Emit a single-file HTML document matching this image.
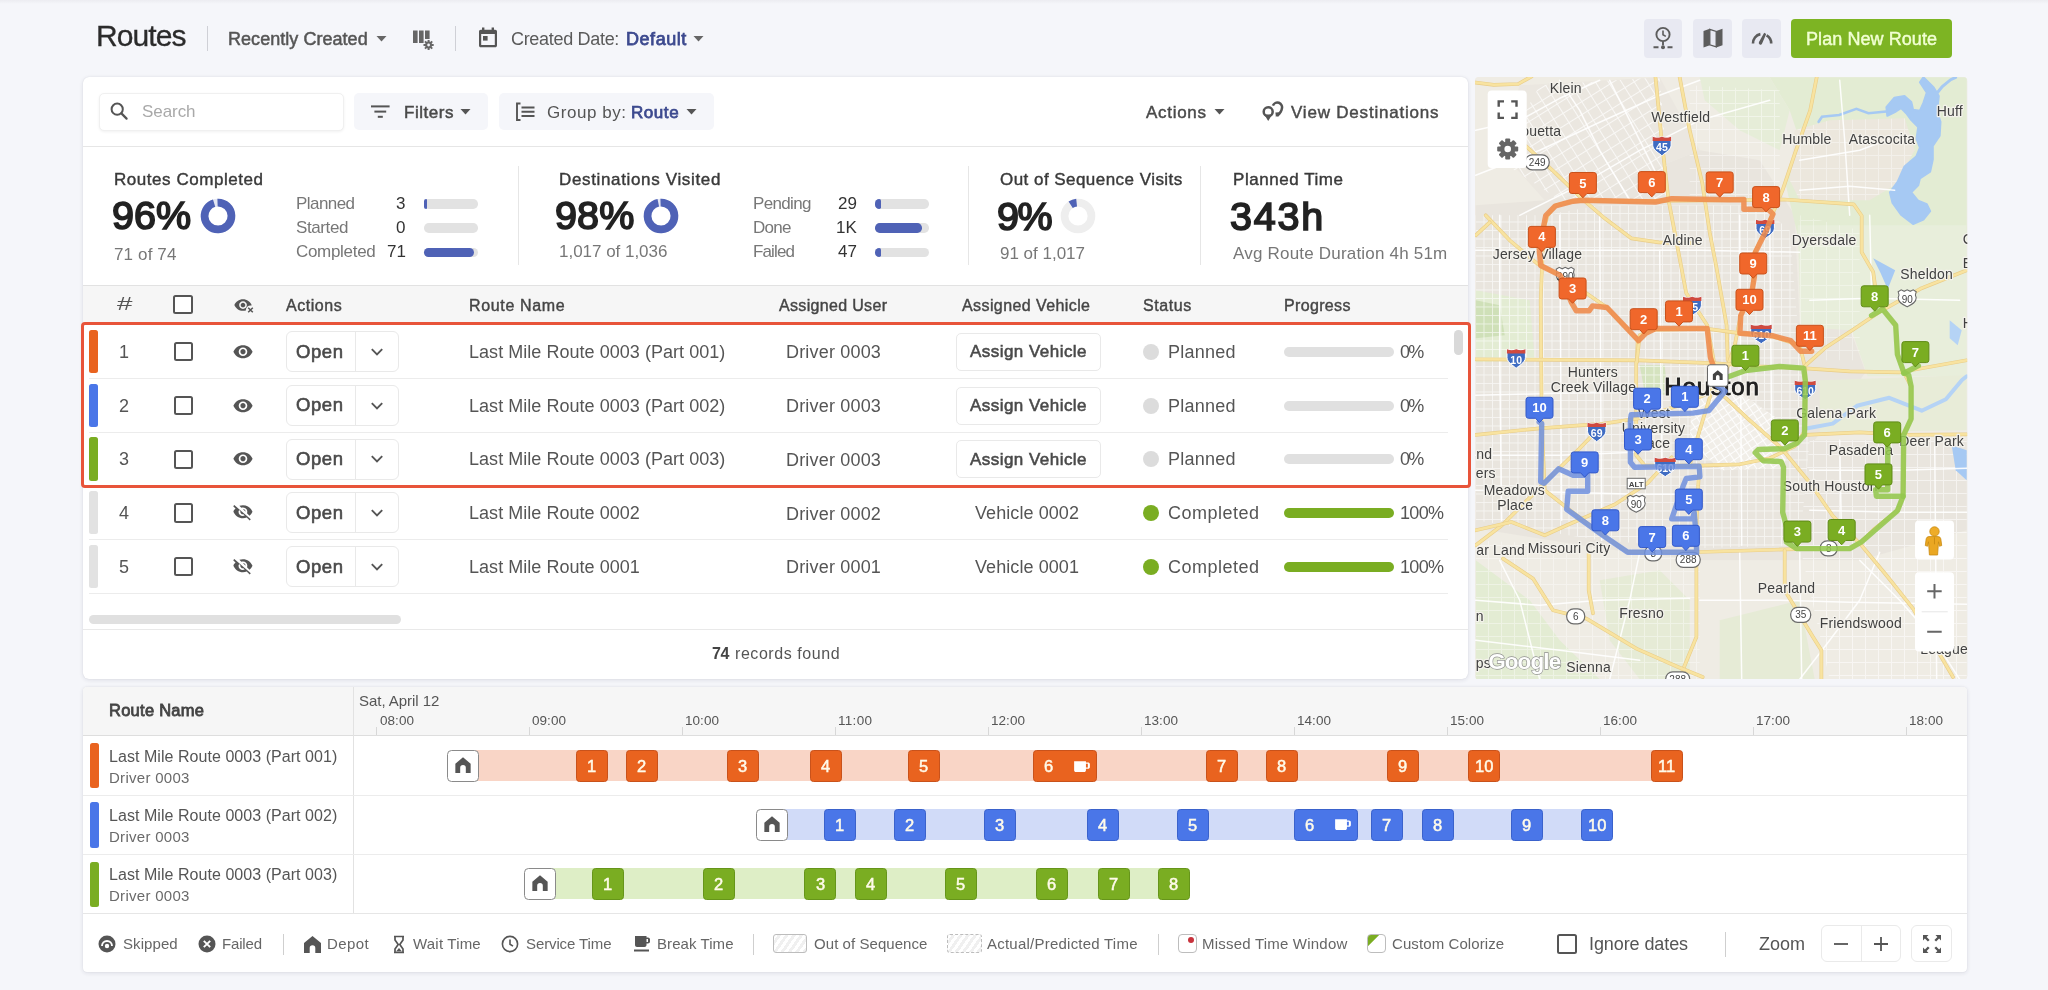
<!DOCTYPE html>
<html lang="en"><head><meta charset="utf-8"><title>Routes</title><style>
html,body{margin:0;padding:0}
body{opacity:.9999;width:2048px;height:990px;overflow:hidden;background:#f5f6fa;font-family:"Liberation Sans",Arial,sans-serif;position:relative}
.t{will-change:transform;position:absolute;white-space:nowrap;line-height:1;display:block}
.b{position:absolute;box-sizing:border-box;display:block}
svg text{font-family:"Liberation Sans",Arial,sans-serif}
</style></head><body>
<!-- p_header -->
<div class="b" style="left:0.0px;top:0.0px;width:2048.0px;height:4.0px;background:linear-gradient(#ececf1,#f5f6fa);"></div>
<span class="t" style="left:95.8px;top:21.1px;font-size:30px;color:#2b2b2b;letter-spacing:-0.91px;-webkit-text-stroke:0.3px #2b2b2b;">Routes</span>
<div class="b" style="left:206.5px;top:26.0px;width:1.0px;height:25.0px;background:#cfd0d6;"></div>
<span class="t" style="left:228.4px;top:29.8px;font-size:18px;color:#555;letter-spacing:0.04px;-webkit-text-stroke:0.5px #555;">Recently Created</span>
<svg class="b" style="left:376.0px;top:35.0px;" width="12" height="8" viewBox="0 0 12 8"><path d="M0.5 1 L10.5 1 L5.5 6.5Z" fill="#666"/></svg>
<svg class="b" style="left:412.0px;top:29.0px;" width="24" height="22" viewBox="0 0 24 22"><g fill="#666"><rect x="1" y="1.5" width="4.6" height="12.5"/><rect x="7" y="1.5" width="4.6" height="12.5"/><rect x="13" y="1.5" width="4.6" height="8.5"/>
    <circle cx="16.6" cy="16" r="3.4"/><g stroke="#666" stroke-width="2"><path d="M16.6 10.9v10.2M11.5 16h10.2M13 12.4l7.2 7.2M20.2 12.4l-7.2 7.2"/></g></g><circle cx="16.6" cy="16" r="1.4" fill="#f5f6fa"/></svg>
<div class="b" style="left:455.0px;top:26.0px;width:1.0px;height:25.0px;background:#cfd0d6;"></div>
<svg class="b" style="left:477.0px;top:26.0px;" width="22" height="23" viewBox="0 0 22 23"><path fill="#555" d="M5 1.5h2.4v2.2h7.2V1.5H17v2.2h1.2c1 0 1.8.8 1.8 1.8v14c0 1-.8 1.8-1.8 1.8H3.8c-1 0-1.8-.8-1.8-1.8v-14c0-1 .8-1.8 1.8-1.8H5z"/><rect x="4.2" y="8" width="13.6" height="11" fill="#f5f6fa"/><rect x="6" y="10" width="4.6" height="4.6" fill="#555"/></svg>
<span class="t" style="left:511.0px;top:29.8px;font-size:18px;color:#5a5a5a;letter-spacing:-0.31px;">Created Date:</span>
<span class="t" style="left:625.7px;top:29.8px;font-size:18px;color:#3d4a8f;letter-spacing:0.54px;-webkit-text-stroke:0.75px #3d4a8f;">Default</span>
<svg class="b" style="left:692.5px;top:35.0px;" width="12" height="8" viewBox="0 0 12 8"><path d="M0.5 1 L10.5 1 L5.5 6.5Z" fill="#666"/></svg>
<div class="b" style="left:1643.7px;top:19.0px;width:38.6px;height:38.6px;background:#e8e9f2;border-radius:4px;"></div>
<div class="b" style="left:1693.0px;top:19.0px;width:38.6px;height:38.6px;background:#e8e9f2;border-radius:4px;"></div>
<div class="b" style="left:1742.2px;top:19.0px;width:38.6px;height:38.6px;background:#e8e9f2;border-radius:4px;"></div>
<svg class="b" style="left:1650.0px;top:25.0px;" width="26" height="28" viewBox="0 0 26 28"><g fill="none" stroke="#5c5c5c" stroke-width="1.9"><circle cx="13" cy="9.5" r="6.6"/><path d="M13 5.6v4.2l2.8 1.6" stroke-width="1.6"/><path d="M13 16.2v4"/><path d="M3.5 22.3h5M17.5 22.3h5"/></g><circle cx="13" cy="22.3" r="2" fill="#5c5c5c"/></svg>
<svg class="b" style="left:1702.0px;top:27.0px;" width="22" height="22" viewBox="0 0 22 22"><path fill="#5c5c5c" d="M1.5 4 7.800 1.800v16.400L1.500 20.500zM14.200 4l6.300-2.200v16.400L14.200 20.500z"/><path fill="none" stroke="#5c5c5c" stroke-width="1.300" d="M7.800 2.400l6.400 2v15.400l-6.400-2z"/></svg>
<svg class="b" style="left:1750.0px;top:27.0px;" width="24" height="20" viewBox="0 0 24 20"><g fill="none" stroke="#5c5c5c" stroke-width="2.6" stroke-linecap="butt"><path d="M3 16.5a9.2 9.2 0 0 1 7.4-9.4"/><path d="M16.6 8.4a9.2 9.2 0 0 1 4.6 8.1"/></g><path fill="#5c5c5c" d="M14.2 5.8l2 1.1-4.2 9.8a1.7 1.7 0 0 1-3-1.6z"/></svg>
<div class="b" style="left:1791.0px;top:18.5px;width:161.3px;height:39.3px;background:#7db423;border-radius:4px;"></div>
<span class="t" style="left:1806.3px;top:30.2px;font-size:18px;color:#f1ffd2;letter-spacing:0.07px;-webkit-text-stroke:0.45px #f1ffd2;">Plan New Route</span>
<!-- p_panel -->
<div class="b" style="left:83.4px;top:77.4px;width:1384.8px;height:601.7px;background:#fff;border-radius:6px;box-shadow:0 1px 5px rgba(60,64,90,.13),0 0 1px rgba(60,64,90,.18);"></div>
<div class="b" style="left:98.5px;top:92.6px;width:245.0px;height:38.6px;background:#fff;border:1px solid #f0f0f0;border-radius:5px;box-shadow:0 1px 3px rgba(0,0,0,.06);"></div>
<svg class="b" style="left:108.0px;top:100.0px;" width="22" height="22" viewBox="0 0 22 22"><circle cx="9.2" cy="9.2" r="5.6" fill="none" stroke="#555" stroke-width="2"/><path d="M13.400 13.400 18.600 18.600" stroke="#555" stroke-width="2.2" stroke-linecap="round"/></svg>
<span class="t" style="left:142.3px;top:103.1px;font-size:17px;color:#a9a9a9;letter-spacing:-0.07px;">Search</span>
<div class="b" style="left:353.7px;top:92.7px;width:134.3px;height:37.8px;background:#f5f6fa;border-radius:5px;"></div>
<svg class="b" style="left:370.0px;top:104.0px;" width="22" height="16" viewBox="0 0 22 16"><g fill="#555"><rect x="1" y="1.4" width="18.6" height="2"/><rect x="4.4" y="6.6" width="11.8" height="2"/><rect x="7.800" y="11.800" width="5" height="2"/></g></svg>
<span class="t" style="left:403.5px;top:103.6px;font-size:17px;color:#4a4a4a;letter-spacing:0.54px;-webkit-text-stroke:0.5px #4a4a4a;">Filters</span>
<svg class="b" style="left:460.0px;top:107.5px;" width="12" height="8" viewBox="0 0 12 8"><path d="M0.5 1 L10.5 1 L5.5 6.5Z" fill="#555"/></svg>
<div class="b" style="left:499.0px;top:92.7px;width:215.0px;height:37.8px;background:#f5f6fa;border-radius:5px;"></div>
<svg class="b" style="left:514.5px;top:102.0px;" width="22" height="20" viewBox="0 0 22 20"><g fill="none" stroke="#555" stroke-width="1.900"><path d="M5.500 1.500H2v16.500h3.500"/><path d="M6.500 5.500H19.500M6.500 9.750H19.500M6.500 14H19.500"/></g></svg>
<span class="t" style="left:547.4px;top:103.6px;font-size:17px;color:#555;letter-spacing:0.54px;">Group by:</span>
<span class="t" style="left:631.4px;top:103.6px;font-size:17px;color:#3d4a8f;letter-spacing:0.56px;-webkit-text-stroke:0.75px #3d4a8f;">Route</span>
<svg class="b" style="left:686.0px;top:107.5px;" width="12" height="8" viewBox="0 0 12 8"><path d="M0.5 1 L10.5 1 L5.5 6.5Z" fill="#555"/></svg>
<span class="t" style="left:1146.0px;top:103.6px;font-size:17px;color:#4a4a4a;letter-spacing:0.71px;-webkit-text-stroke:0.45px #4a4a4a;">Actions</span>
<svg class="b" style="left:1213.5px;top:107.5px;" width="12" height="8" viewBox="0 0 12 8"><path d="M0.5 1 L10.5 1 L5.5 6.5Z" fill="#555"/></svg>
<svg class="b" style="left:1261.0px;top:101.0px;" width="24" height="22" viewBox="0 0 24 22"><g fill="none" stroke="#555" stroke-width="2.500"><circle cx="7.200" cy="10.800" r="4.500"/><path d="M11.900 4.700A4.700 4.700 0 0 1 20.800 7.800C20.600 10.600 18.400 12.600 16 15" stroke-linecap="butt"/></g><path fill="#555" d="M3.300 13.600h7.800L7.200 20zM18.600 11.200 14.900 16.200 14.400 11.600z"/></svg>
<span class="t" style="left:1290.9px;top:103.6px;font-size:17px;color:#4a4a4a;letter-spacing:0.80px;-webkit-text-stroke:0.45px #4a4a4a;">View Destinations</span>
<div class="b" style="left:83.4px;top:146.0px;width:1384.8px;height:1.0px;background:#e6e6e6;"></div>
<span class="t" style="left:114.0px;top:170.9px;font-size:17px;color:#3a3a3a;letter-spacing:0.55px;-webkit-text-stroke:0.42px #3a3a3a;">Routes Completed</span>
<span class="t" style="left:111.5px;top:196.4px;font-size:39.5px;color:#222;letter-spacing:-0.03px;-webkit-text-stroke:1.7px #222;">96%</span>
<svg class="b" style="left:198.2px;top:195.9px;" width="40" height="40" viewBox="0 0 40 40"><circle cx="20" cy="20" r="13.45" fill="none" stroke="#e3e6f3" stroke-width="7.70"/><circle cx="20" cy="20" r="13.45" fill="none" stroke="#4f62b6" stroke-width="7.70" stroke-dasharray="80.45 84.51" transform="rotate(-92 20 20)"/></svg>
<span class="t" style="left:113.6px;top:245.6px;font-size:17px;color:#777;letter-spacing:0.14px;">71 of 74</span>
<span class="t" style="left:295.6px;top:194.6px;font-size:17px;color:#777;letter-spacing:-0.56px;">Planned</span>
<span class="t" style="left:395.9px;top:194.6px;font-size:17px;color:#333;">3</span>
<div class="b" style="left:423.6px;top:199.1px;width:54.0px;height:9.5px;background:#e2e2e2;border-radius:4.75px;"></div><div class="b" style="left:423.6px;top:199.1px;width:3.2px;height:9.5px;background:#4f62b6;border-radius:2.5px;border-radius:4.8px 2px 2px 4.8px;"></div>
<span class="t" style="left:295.6px;top:218.8px;font-size:17px;color:#777;letter-spacing:-0.39px;">Started</span>
<span class="t" style="left:395.9px;top:218.8px;font-size:17px;color:#333;">0</span>
<div class="b" style="left:423.6px;top:223.2px;width:54.0px;height:9.5px;background:#e2e2e2;border-radius:4.75px;"></div>
<span class="t" style="left:295.6px;top:243.3px;font-size:17px;color:#777;letter-spacing:-0.31px;">Completed</span>
<span class="t" style="left:386.5px;top:243.3px;font-size:17px;color:#333;">71</span>
<div class="b" style="left:423.6px;top:247.8px;width:54.0px;height:9.5px;background:#e2e2e2;border-radius:4.75px;"></div><div class="b" style="left:423.6px;top:247.8px;width:50.2px;height:9.5px;background:#4f62b6;border-radius:4.75px;"></div>
<div class="b" style="left:517.5px;top:166.0px;width:1.0px;height:99.0px;background:#e6e6e6;"></div>
<span class="t" style="left:558.6px;top:170.9px;font-size:17px;color:#3a3a3a;letter-spacing:0.65px;-webkit-text-stroke:0.42px #3a3a3a;">Destinations Visited</span>
<span class="t" style="left:554.7px;top:196.4px;font-size:39.5px;color:#222;letter-spacing:0.12px;-webkit-text-stroke:1.7px #222;">98%</span>
<svg class="b" style="left:640.6px;top:195.9px;" width="40" height="40" viewBox="0 0 40 40"><circle cx="20" cy="20" r="13.45" fill="none" stroke="#e3e6f3" stroke-width="7.70"/><circle cx="20" cy="20" r="13.45" fill="none" stroke="#4f62b6" stroke-width="7.70" stroke-dasharray="81.64 84.51" transform="rotate(-92 20 20)"/></svg>
<span class="t" style="left:559.0px;top:243.3px;font-size:17px;color:#777;letter-spacing:-0.02px;">1,017 of 1,036</span>
<span class="t" style="left:753.4px;top:194.6px;font-size:17px;color:#777;letter-spacing:-0.65px;">Pending</span>
<span class="t" style="left:837.6px;top:194.6px;font-size:17px;color:#333;">29</span>
<div class="b" style="left:875.4px;top:199.1px;width:54.0px;height:9.5px;background:#e2e2e2;border-radius:4.75px;"></div><div class="b" style="left:875.4px;top:199.1px;width:5.9px;height:9.5px;background:#4f62b6;border-radius:2.5px;border-radius:4.8px 2px 2px 4.8px;"></div>
<span class="t" style="left:753.4px;top:218.8px;font-size:17px;color:#777;letter-spacing:-0.71px;">Done</span>
<span class="t" style="left:835.7px;top:218.8px;font-size:17px;color:#333;">1K</span>
<div class="b" style="left:875.4px;top:223.2px;width:54.0px;height:9.5px;background:#e2e2e2;border-radius:4.75px;"></div><div class="b" style="left:875.4px;top:223.2px;width:47.0px;height:9.5px;background:#4f62b6;border-radius:4.75px;"></div>
<span class="t" style="left:753.4px;top:243.3px;font-size:17px;color:#777;letter-spacing:-0.86px;">Failed</span>
<span class="t" style="left:837.6px;top:243.3px;font-size:17px;color:#333;">47</span>
<div class="b" style="left:875.4px;top:247.8px;width:54.0px;height:9.5px;background:#e2e2e2;border-radius:4.75px;"></div><div class="b" style="left:875.4px;top:247.8px;width:5.9px;height:9.5px;background:#4f62b6;border-radius:2.5px;border-radius:4.8px 2px 2px 4.8px;"></div>
<div class="b" style="left:968.0px;top:166.0px;width:1.0px;height:99.0px;background:#e6e6e6;"></div>
<span class="t" style="left:999.8px;top:170.6px;font-size:17px;color:#3a3a3a;letter-spacing:0.46px;-webkit-text-stroke:0.42px #3a3a3a;">Out of Sequence Visits</span>
<span class="t" style="left:997.3px;top:196.8px;font-size:39.5px;color:#222;letter-spacing:-1.39px;-webkit-text-stroke:1.7px #222;">9%</span>
<svg class="b" style="left:1058.2px;top:195.7px;" width="40" height="40" viewBox="0 0 40 40"><circle cx="20" cy="20" r="13.45" fill="none" stroke="#eeeeee" stroke-width="7.70"/><circle cx="20" cy="20" r="13.45" fill="none" stroke="#4f62b6" stroke-width="7.70" stroke-dasharray="6.34 84.51" transform="rotate(-123 20 20)"/></svg>
<span class="t" style="left:999.8px;top:245.2px;font-size:17px;color:#777;letter-spacing:-0.01px;">91 of 1,017</span>
<div class="b" style="left:1200.0px;top:166.0px;width:1.0px;height:99.0px;background:#e6e6e6;"></div>
<span class="t" style="left:1233.0px;top:170.6px;font-size:17px;color:#3a3a3a;letter-spacing:0.55px;-webkit-text-stroke:0.42px #3a3a3a;">Planned Time</span>
<span class="t" style="left:1230.0px;top:196.8px;font-size:39.5px;color:#222;letter-spacing:1.81px;-webkit-text-stroke:1.7px #222;">343h</span>
<span class="t" style="left:1233.0px;top:245.2px;font-size:17px;color:#777;letter-spacing:0.20px;">Avg Route Duration 4h 51m</span>
<div class="b" style="left:83.4px;top:285.4px;width:1384.8px;height:37.5px;background:#f6f6f6;border-top:1px solid #e2e2e2;"></div>
<span class="t" style="left:117.0px;top:295.3px;font-size:18.5px;color:#555;transform:scaleX(1.5);transform-origin:0 0;">#</span>
<div class="b" style="left:173.4px;top:294.6px;width:19.5px;height:19.2px;background:#fff;border:2px solid #555;border-radius:2.5px;"></div>
<svg class="b" style="left:233.5px;top:296.5px;" width="22" height="18" viewBox="0 0 22 18"><path transform="scale(.9) translate(0,1.2)" fill="#555" d="M10 1.2C5.6 1.2 1.9 3.9.4 7.7c1.5 3.8 5.2 6.5 9.6 6.5s8.1-2.7 9.6-6.5C18.100 3.900 14.400 1.200 10 1.200zm0 10.800c-2.400 0-4.300-1.900-4.300-4.300S7.600 3.400 10 3.400s4.300 1.900 4.300 4.300S12.400 12 10 12zm0-6.900c-1.400 0-2.600 1.200-2.600 2.600s1.200 2.600 2.600 2.600 2.600-1.200 2.600-2.600S11.400 5.100 10 5.100z"/><circle cx="16.500" cy="13" r="4.600" fill="#f6f6f6"/><path d="M14.200 10.700 18.800 15.300M18.800 10.700 14.200 15.300" stroke="#555" stroke-width="1.500"/></svg>
<span class="t" style="left:286.0px;top:297.5px;font-size:16px;color:#454545;letter-spacing:0.54px;-webkit-text-stroke:0.42px #454545;">Actions</span>
<span class="t" style="left:469.3px;top:297.5px;font-size:16px;color:#454545;letter-spacing:0.65px;-webkit-text-stroke:0.42px #454545;">Route Name</span>
<span class="t" style="left:779.4px;top:297.5px;font-size:16px;color:#454545;letter-spacing:0.33px;-webkit-text-stroke:0.42px #454545;">Assigned User</span>
<span class="t" style="left:962.4px;top:297.5px;font-size:16px;color:#454545;letter-spacing:0.41px;-webkit-text-stroke:0.42px #454545;">Assigned Vehicle</span>
<span class="t" style="left:1143.0px;top:297.5px;font-size:16px;color:#454545;letter-spacing:0.59px;-webkit-text-stroke:0.42px #454545;">Status</span>
<span class="t" style="left:1283.5px;top:297.5px;font-size:16px;color:#454545;letter-spacing:0.35px;-webkit-text-stroke:0.42px #454545;">Progress</span>
<div class="b" style="left:88.5px;top:378.1px;width:1359.0px;height:1.0px;background:#ececec;"></div>
<div class="b" style="left:88.8px;top:329.8px;width:9.3px;height:43.4px;background:#e9631f;border-radius:2.5px;"></div>
<span class="t" style="left:118.6px;top:342.8px;font-size:18px;color:#555;">1</span>
<div class="b" style="left:173.8px;top:342.2px;width:19.5px;height:19.2px;background:#fff;border:2px solid #555;border-radius:2.5px;"></div>
<svg class="b" style="left:233.4px;top:343.8px;" width="20" height="16" viewBox="0 0 20 16"><path fill="#555" d="M10 1.2C5.6 1.2 1.9 3.9.4 7.7c1.5 3.8 5.2 6.5 9.6 6.5s8.1-2.7 9.6-6.5C18.100 3.900 14.400 1.200 10 1.200zm0 10.800c-2.400 0-4.300-1.900-4.300-4.300S7.600 3.400 10 3.400s4.300 1.900 4.300 4.300S12.400 12 10 12zm0-6.900c-1.400 0-2.600 1.200-2.600 2.600s1.200 2.600 2.600 2.600 2.600-1.200 2.600-2.600S11.400 5.100 10 5.100z"/></svg>
<div class="b" style="left:285.5px;top:331.2px;width:113.3px;height:41.0px;background:#fff;border:1px solid #e9e9e9;border-radius:6px;"></div>
<div class="b" style="left:355.0px;top:331.2px;width:1.0px;height:41.0px;background:#e9e9e9;"></div>
<span class="t" style="left:296.4px;top:342.6px;font-size:18.5px;color:#4a4a4a;letter-spacing:0.58px;-webkit-text-stroke:0.6px #4a4a4a;">Open</span>
<svg class="b" style="left:370.0px;top:346.8px;" width="14" height="10" viewBox="0 0 14 10"><path d="M1.800 2.200 7 7.400 12.200 2.200" fill="none" stroke="#555" stroke-width="1.900"/></svg>
<span class="t" style="left:469.3px;top:342.8px;font-size:18px;color:#555;letter-spacing:0.04px;">Last Mile Route 0003 (Part 001)</span>
<span class="t" style="left:786.2px;top:343.3px;font-size:18px;color:#555;letter-spacing:0.18px;">Driver 0003</span>
<div class="b" style="left:955.8px;top:332.8px;width:145.5px;height:38.2px;background:#fff;border:1px solid #e9e9e9;border-radius:5px;"></div>
<span class="t" style="left:970.3px;top:343.4px;font-size:17px;color:#4a4a4a;letter-spacing:0.46px;-webkit-text-stroke:0.55px #4a4a4a;">Assign Vehicle</span>
<div class="b" style="left:1142.5px;top:343.8px;width:16.0px;height:16.0px;background:#dcdcdc;border-radius:8px;"></div>
<span class="t" style="left:1168.3px;top:342.8px;font-size:18px;color:#555;letter-spacing:0.24px;">Planned</span>
<div class="b" style="left:1283.5px;top:346.8px;width:110.5px;height:10.0px;background:#e0e0e0;border-radius:5px;"></div>
<span class="t" style="left:1399.5px;top:342.8px;font-size:18px;color:#555;letter-spacing:-1.72px;">0%</span>
<div class="b" style="left:88.5px;top:431.8px;width:1359.0px;height:1.0px;background:#ececec;"></div>
<div class="b" style="left:88.8px;top:383.6px;width:9.3px;height:43.4px;background:#4a76e8;border-radius:2.5px;"></div>
<span class="t" style="left:118.6px;top:396.6px;font-size:18px;color:#555;">2</span>
<div class="b" style="left:173.8px;top:395.9px;width:19.5px;height:19.2px;background:#fff;border:2px solid #555;border-radius:2.5px;"></div>
<svg class="b" style="left:233.4px;top:397.5px;" width="20" height="16" viewBox="0 0 20 16"><path fill="#555" d="M10 1.2C5.6 1.2 1.9 3.9.4 7.7c1.5 3.8 5.2 6.5 9.6 6.5s8.1-2.7 9.6-6.5C18.100 3.900 14.400 1.200 10 1.200zm0 10.800c-2.400 0-4.300-1.900-4.300-4.300S7.600 3.400 10 3.400s4.300 1.900 4.300 4.300S12.400 12 10 12zm0-6.900c-1.400 0-2.600 1.200-2.600 2.600s1.200 2.600 2.600 2.600 2.600-1.200 2.600-2.600S11.400 5.100 10 5.100z"/></svg>
<div class="b" style="left:285.5px;top:384.9px;width:113.3px;height:41.0px;background:#fff;border:1px solid #e9e9e9;border-radius:6px;"></div>
<div class="b" style="left:355.0px;top:384.9px;width:1.0px;height:41.0px;background:#e9e9e9;"></div>
<span class="t" style="left:296.4px;top:396.4px;font-size:18.5px;color:#4a4a4a;letter-spacing:0.58px;-webkit-text-stroke:0.6px #4a4a4a;">Open</span>
<svg class="b" style="left:370.0px;top:400.5px;" width="14" height="10" viewBox="0 0 14 10"><path d="M1.800 2.200 7 7.400 12.200 2.200" fill="none" stroke="#555" stroke-width="1.900"/></svg>
<span class="t" style="left:469.3px;top:396.6px;font-size:18px;color:#555;letter-spacing:0.04px;">Last Mile Route 0003 (Part 002)</span>
<span class="t" style="left:786.2px;top:397.1px;font-size:18px;color:#555;letter-spacing:0.18px;">Driver 0003</span>
<div class="b" style="left:955.8px;top:386.5px;width:145.5px;height:38.2px;background:#fff;border:1px solid #e9e9e9;border-radius:5px;"></div>
<span class="t" style="left:970.3px;top:397.1px;font-size:17px;color:#4a4a4a;letter-spacing:0.46px;-webkit-text-stroke:0.55px #4a4a4a;">Assign Vehicle</span>
<div class="b" style="left:1142.5px;top:397.5px;width:16.0px;height:16.0px;background:#dcdcdc;border-radius:8px;"></div>
<span class="t" style="left:1168.3px;top:396.6px;font-size:18px;color:#555;letter-spacing:0.24px;">Planned</span>
<div class="b" style="left:1283.5px;top:400.5px;width:110.5px;height:10.0px;background:#e0e0e0;border-radius:5px;"></div>
<span class="t" style="left:1399.5px;top:396.6px;font-size:18px;color:#555;letter-spacing:-1.72px;">0%</span>
<div class="b" style="left:88.5px;top:485.6px;width:1359.0px;height:1.0px;background:#ececec;"></div>
<div class="b" style="left:88.8px;top:437.3px;width:9.3px;height:43.4px;background:#7aad22;border-radius:2.5px;"></div>
<span class="t" style="left:118.6px;top:450.3px;font-size:18px;color:#555;">3</span>
<div class="b" style="left:173.8px;top:449.7px;width:19.5px;height:19.2px;background:#fff;border:2px solid #555;border-radius:2.5px;"></div>
<svg class="b" style="left:233.4px;top:451.3px;" width="20" height="16" viewBox="0 0 20 16"><path fill="#555" d="M10 1.2C5.6 1.2 1.9 3.9.4 7.7c1.5 3.8 5.2 6.5 9.6 6.5s8.1-2.7 9.6-6.5C18.100 3.900 14.400 1.200 10 1.200zm0 10.800c-2.400 0-4.300-1.900-4.300-4.300S7.600 3.400 10 3.400s4.300 1.900 4.300 4.300S12.400 12 10 12zm0-6.900c-1.400 0-2.600 1.200-2.600 2.600s1.200 2.600 2.600 2.600 2.600-1.200 2.600-2.600S11.400 5.100 10 5.100z"/></svg>
<div class="b" style="left:285.5px;top:438.7px;width:113.3px;height:41.0px;background:#fff;border:1px solid #e9e9e9;border-radius:6px;"></div>
<div class="b" style="left:355.0px;top:438.7px;width:1.0px;height:41.0px;background:#e9e9e9;"></div>
<span class="t" style="left:296.4px;top:450.1px;font-size:18.5px;color:#4a4a4a;letter-spacing:0.58px;-webkit-text-stroke:0.6px #4a4a4a;">Open</span>
<svg class="b" style="left:370.0px;top:454.3px;" width="14" height="10" viewBox="0 0 14 10"><path d="M1.800 2.200 7 7.400 12.200 2.200" fill="none" stroke="#555" stroke-width="1.900"/></svg>
<span class="t" style="left:469.3px;top:450.3px;font-size:18px;color:#555;letter-spacing:0.04px;">Last Mile Route 0003 (Part 003)</span>
<span class="t" style="left:786.2px;top:450.8px;font-size:18px;color:#555;letter-spacing:0.18px;">Driver 0003</span>
<div class="b" style="left:955.8px;top:440.3px;width:145.5px;height:38.2px;background:#fff;border:1px solid #e9e9e9;border-radius:5px;"></div>
<span class="t" style="left:970.3px;top:450.9px;font-size:17px;color:#4a4a4a;letter-spacing:0.46px;-webkit-text-stroke:0.55px #4a4a4a;">Assign Vehicle</span>
<div class="b" style="left:1142.5px;top:451.3px;width:16.0px;height:16.0px;background:#dcdcdc;border-radius:8px;"></div>
<span class="t" style="left:1168.3px;top:450.3px;font-size:18px;color:#555;letter-spacing:0.24px;">Planned</span>
<div class="b" style="left:1283.5px;top:454.3px;width:110.5px;height:10.0px;background:#e0e0e0;border-radius:5px;"></div>
<span class="t" style="left:1399.5px;top:450.3px;font-size:18px;color:#555;letter-spacing:-1.72px;">0%</span>
<div class="b" style="left:88.5px;top:539.3px;width:1359.0px;height:1.0px;background:#ececec;"></div>
<div class="b" style="left:88.8px;top:491.1px;width:9.3px;height:43.4px;background:#e2e2e2;border-radius:2.5px;"></div>
<span class="t" style="left:118.6px;top:504.1px;font-size:18px;color:#555;">4</span>
<div class="b" style="left:173.8px;top:503.4px;width:19.5px;height:19.2px;background:#fff;border:2px solid #555;border-radius:2.5px;"></div>
<svg class="b" style="left:233.4px;top:504.0px;" width="20" height="18" viewBox="0 0 20 18"><path fill="#555" d="M10 3.400c2.400 0 4.300 1.900 4.300 4.300 0 .6-.1 1.100-.3 1.600l2.500 2.500c1.300-1.100 2.300-2.500 3-4.100-1.500-3.800-5.200-6.500-9.600-6.500-1.200 0-2.400.2-3.500.6l1.900 1.900c.5-.2 1.100-.3 1.700-.3zM1.300 1.100.2 2.200l2 2 .4.400C1.500 5.400.6 6.500.4 7.700c1.500 3.800 5.200 6.500 9.600 6.500 1.300 0 2.600-.3 3.800-.700l.4.400 2.500 2.500 1.100-1.100zm4.800 4.800 1.300 1.300c0 .200-.1.400-.1.500 0 1.400 1.200 2.600 2.600 2.600.200 0 .400 0 .500-.1l1.300 1.300c-.6.300-1.200.5-1.900.5-2.400 0-4.300-1.900-4.300-4.300.1-.6.300-1.200.6-1.800zm3.800-.8 2.700 2.700v-.1c0-1.400-1.200-2.600-2.600-2.600z"/></svg>
<div class="b" style="left:285.5px;top:492.4px;width:113.3px;height:41.0px;background:#fff;border:1px solid #e9e9e9;border-radius:6px;"></div>
<div class="b" style="left:355.0px;top:492.4px;width:1.0px;height:41.0px;background:#e9e9e9;"></div>
<span class="t" style="left:296.4px;top:503.9px;font-size:18.5px;color:#4a4a4a;letter-spacing:0.58px;-webkit-text-stroke:0.6px #4a4a4a;">Open</span>
<svg class="b" style="left:370.0px;top:508.0px;" width="14" height="10" viewBox="0 0 14 10"><path d="M1.800 2.200 7 7.400 12.200 2.200" fill="none" stroke="#555" stroke-width="1.900"/></svg>
<span class="t" style="left:469.3px;top:504.1px;font-size:18px;color:#555;letter-spacing:0.04px;">Last Mile Route 0002</span>
<span class="t" style="left:786.2px;top:504.6px;font-size:18px;color:#555;letter-spacing:0.18px;">Driver 0002</span>
<span class="t" style="left:974.5px;top:504.1px;font-size:18px;color:#555;letter-spacing:0.08px;">Vehicle 0002</span>
<div class="b" style="left:1142.5px;top:505.0px;width:16.0px;height:16.0px;background:#7aad22;border-radius:8px;"></div>
<span class="t" style="left:1168.3px;top:504.1px;font-size:18px;color:#555;letter-spacing:0.49px;">Completed</span>
<div class="b" style="left:1283.5px;top:508.0px;width:110.5px;height:10.0px;background:#7aad22;border-radius:5px;"></div>
<span class="t" style="left:1400.3px;top:504.1px;font-size:18px;color:#555;letter-spacing:-0.68px;">100%</span>
<div class="b" style="left:88.5px;top:593.0px;width:1359.0px;height:1.0px;background:#ececec;"></div>
<div class="b" style="left:88.8px;top:544.8px;width:9.3px;height:43.4px;background:#e2e2e2;border-radius:2.5px;"></div>
<span class="t" style="left:118.6px;top:557.8px;font-size:18px;color:#555;">5</span>
<div class="b" style="left:173.8px;top:557.2px;width:19.5px;height:19.2px;background:#fff;border:2px solid #555;border-radius:2.5px;"></div>
<svg class="b" style="left:233.4px;top:557.8px;" width="20" height="18" viewBox="0 0 20 18"><path fill="#555" d="M10 3.400c2.400 0 4.300 1.900 4.300 4.300 0 .6-.1 1.100-.3 1.600l2.500 2.500c1.300-1.100 2.300-2.500 3-4.100-1.500-3.800-5.200-6.500-9.600-6.500-1.200 0-2.400.2-3.500.6l1.900 1.900c.5-.2 1.100-.3 1.700-.3zM1.300 1.100.2 2.200l2 2 .4.400C1.500 5.400.6 6.500.4 7.700c1.500 3.800 5.200 6.500 9.600 6.500 1.300 0 2.600-.3 3.800-.700l.4.400 2.500 2.500 1.100-1.100zm4.800 4.800 1.300 1.300c0 .200-.1.400-.1.500 0 1.400 1.200 2.600 2.600 2.600.200 0 .400 0 .500-.1l1.300 1.300c-.6.300-1.200.5-1.900.5-2.400 0-4.300-1.900-4.300-4.300.1-.6.300-1.200.6-1.800zm3.800-.8 2.700 2.700v-.1c0-1.400-1.200-2.600-2.600-2.600z"/></svg>
<div class="b" style="left:285.5px;top:546.2px;width:113.3px;height:41.0px;background:#fff;border:1px solid #e9e9e9;border-radius:6px;"></div>
<div class="b" style="left:355.0px;top:546.2px;width:1.0px;height:41.0px;background:#e9e9e9;"></div>
<span class="t" style="left:296.4px;top:557.6px;font-size:18.5px;color:#4a4a4a;letter-spacing:0.58px;-webkit-text-stroke:0.6px #4a4a4a;">Open</span>
<svg class="b" style="left:370.0px;top:561.8px;" width="14" height="10" viewBox="0 0 14 10"><path d="M1.800 2.200 7 7.400 12.200 2.200" fill="none" stroke="#555" stroke-width="1.900"/></svg>
<span class="t" style="left:469.3px;top:557.8px;font-size:18px;color:#555;letter-spacing:0.04px;">Last Mile Route 0001</span>
<span class="t" style="left:786.2px;top:558.3px;font-size:18px;color:#555;letter-spacing:0.18px;">Driver 0001</span>
<span class="t" style="left:974.5px;top:557.8px;font-size:18px;color:#555;letter-spacing:0.08px;">Vehicle 0001</span>
<div class="b" style="left:1142.5px;top:558.8px;width:16.0px;height:16.0px;background:#7aad22;border-radius:8px;"></div>
<span class="t" style="left:1168.3px;top:557.8px;font-size:18px;color:#555;letter-spacing:0.49px;">Completed</span>
<div class="b" style="left:1283.5px;top:561.8px;width:110.5px;height:10.0px;background:#7aad22;border-radius:5px;"></div>
<span class="t" style="left:1400.3px;top:557.8px;font-size:18px;color:#555;letter-spacing:-0.68px;">100%</span>
<div class="b" style="left:81.0px;top:322.0px;width:1390.0px;height:166.3px;border:3px solid #e8543a;border-radius:4px;"></div>
<div class="b" style="left:1454.0px;top:329.6px;width:8.6px;height:25.5px;background:#d9d9d9;border-radius:4.3px;"></div>
<div class="b" style="left:88.5px;top:614.8px;width:312.5px;height:9.5px;background:#e0e0e0;border-radius:4.8px;"></div>
<div class="b" style="left:83.4px;top:628.5px;width:1384.8px;height:1.0px;background:#e9e9e9;"></div>
<span class="t" style="left:712.0px;top:645.5px;font-size:16px;color:#444;letter-spacing:-0.30px;font-weight:700;">74</span>
<span class="t" style="left:734.5px;top:645.5px;font-size:16px;color:#555;letter-spacing:0.56px;">records found</span>
<!-- p_map -->
<svg class="b" style="left:1475.3px;top:76.7px;" width="492.3" height="602.7" viewBox="0 0 492.3 602.7"><defs><pattern id="gr" width="8.500" height="8.500" patternUnits="userSpaceOnUse"><path d="M0 .5H8.500M.5 0V8.500" stroke="#fff" stroke-width=".9" opacity=".62"/></pattern><pattern id="gr2" width="11" height="11" patternUnits="userSpaceOnUse" patternTransform="rotate(-32)"><path d="M0 .5H11M.5 0V11" stroke="#fff" stroke-width="1" opacity=".7"/></pattern><pattern id="gr4" width="7" height="7" patternUnits="userSpaceOnUse" patternTransform="rotate(-34)"><path d="M0 .5H7M.5 0V7" stroke="#fff" stroke-width="1.100" opacity=".9"/></pattern><pattern id="gr3" width="13" height="13" patternUnits="userSpaceOnUse"><path d="M0 .5H13M.5 0V13" stroke="#fff" stroke-width="1" opacity=".55"/></pattern><filter id="bl" x="-2%" y="-2%" width="104%" height="104%"><feGaussianBlur stdDeviation="0.55"/></filter><clipPath id="mc"><rect width="492.3" height="602.7" rx="4"/></clipPath></defs><g clip-path="url(#mc)"><rect width="492.3" height="602.7" fill="#efece4"/><g filter="url(#bl)"><rect x="-5" y="-5" width="502.3" height="612.7" fill="#efece4"/><path d="M0.7 128.3L69.7 123.3L124.7 113.3L224.7 73.3L284.7 83.3L319.7 138.3L324.7 248.3L374.7 251.3L390.7 295.3L339.7 363.3L491.7 363.3L491.7 453.3L384.7 483.3L224.7 483.3L124.7 471.3L0.7 451.3Z" fill="#e9e5de"/><path d="M44.7 8.3L184.7 0.3L224.7 73.3L124.7 113.3L69.7 123.3L24.7 73.3Z" fill="#ebe7e0"/><path d="M294.7 0.3L491.7 0.3L491.7 158.3L322.7 158.3L309.7 103.3L324.7 63.3L314.7 33.3Z" fill="#e3ecd3"/><path d="M322.7 148.3L491.7 148.3L491.7 299.3L392.7 299.3L376.7 253.3L325.7 250.3Z" fill="#e8eedb"/><path d="M319.7 53.3L354.7 43.3L429.7 41.3L439.7 73.3L419.7 108.3L394.7 123.3L324.7 123.3L314.7 103.3Z" fill="#ece7dd"/><path d="M319.7 53.3L354.7 43.3L429.7 41.3L439.7 73.3L419.7 108.3L394.7 123.3L324.7 123.3L314.7 103.3Z" fill="url(#gr3)" opacity=".7"/><path d="M0.7 483.3L54.7 523.3L84.7 563.3L124.7 602.3L0.7 602.3Z" fill="#e3ecd3"/><path d="M124.7 503.3L184.7 493.3L214.7 523.3L214.7 602.3L164.7 602.3L134.7 563.3Z" fill="#e6ebd6"/><path d="M244.7 543.3L324.7 523.3L339.7 602.3L244.7 602.3Z" fill="#e6ebd6"/><path d="M0.7 213.3L54.7 223.3L59.7 283.3L0.7 285.3Z" fill="#e3ecd3"/><path d="M344.7 303.3L491.7 298.3L491.7 353.3L344.7 355.3Z" fill="#e8ecd8"/><path d="M0.7 223.3L24.7 228.3L29.7 258.3L0.7 261.3Z" fill="#cfe0b8"/><path d="M164.7 288.3L189.7 288.3L192.7 318.3L169.7 315.3Z" fill="#d5e3bf"/><path d="M224.7 0.3L294.7 0.3L314.7 33.3L304.7 73.3L264.7 53.3L229.7 23.3Z" fill="#e6edd8"/><path d="M0.7 138.3L69.7 138.3L124.7 128.3L284.7 128.3L314.7 153.3L324.7 273.3L334.7 363.3L324.7 468.3L224.7 471.3L124.7 463.3L0.7 443.3Z" fill="url(#gr)"/><path d="M64.7 8.3L184.7 0.3L194.7 123.3L84.7 123.3L24.7 83.3Z" fill="url(#gr2)"/><path d="M334.7 363.3L491.7 363.3L491.7 602.3L354.7 602.3L324.7 468.3Z" fill="url(#gr3)"/><path d="M0.7 463.3L224.7 475.3L224.7 602.3L0.7 602.3Z" fill="url(#gr3)" opacity=".7"/><path d="M324.7 138.3L384.7 153.3L384.7 283.3L324.7 283.3Z" fill="url(#gr3)" opacity=".6"/><path d="M214.7 8.3L304.7 13.3L304.7 123.3L214.7 123.3Z" fill="url(#gr3)" opacity=".8"/><path d="M216.7 325.3L252.7 307.3L316.7 351.3L308.7 391.3L246.7 393.3L214.7 365.3Z" fill="#f1eee8"/><path d="M216.7 325.3L252.7 307.3L316.7 351.3L308.7 391.3L246.7 393.3L214.7 365.3Z" fill="url(#gr4)"/><path d="M411.4 30.2L419.2 20.8L429.5 19.1L436.3 25.1L438.1 32.8L444.9 33.7L448.4 25.9L451.8 15.6L444.9 5.3L448.4 0.3L458.7 10.5L463.8 19.1L462.1 34.5L465.5 44.8L464.7 58.6L457.8 68.9L457.8 82.6L455.2 94.6L444.9 101.5L443.2 108.4L436.3 115.3L443.2 123.8L451.8 127.3L455.2 134.1L448.4 142.7L438.1 147.0L426.0 137.6L417.4 125.6L414.9 115.3L422.6 104.9L429.5 89.5L441.5 79.2L444.9 70.6L441.5 62.0L443.2 50.0L436.3 43.1L431.2 36.2L426.0 31.1L420.9 34.5L412.3 38.8Z" fill="#a6c9f3" stroke="#a6c9f3" stroke-width="2" stroke-linejoin="round"/><path d="M462.7 15.3L467.3 9.6L475.7 2.7L480.7 0.3" fill="none" stroke="#a6c9f3" stroke-width="3" stroke-linecap="round"/><path d="M411.4 34.5L393.4 36.3L381.4 31.9L364.2 38.0L347.0 39.7L343.6 44.8" fill="none" stroke="#a6c9f3" stroke-width="2.600" stroke-linecap="round"/><path d="M398.2 181.3L420.2 193.3L412.7 212.3L405.7 196.3Z" fill="#a6c9f3"/><path d="M332.7 351.3L357.7 346.6L382.0 328.8L414.3 320.8L446.7 333.7L470.9 322.3L487.0 303.0L491.7 299.3" fill="none" stroke="#b5d3f5" stroke-width="4" stroke-linecap="round" stroke-linejoin="round"/><path d="M476.7 368.3L491.7 373.3L491.7 403.3L480.7 393.3Z" fill="#a6c9f3"/><path d="M474.7 243.3L486.7 253.3L482.7 268.3L474.7 261.3Z" fill="#b5d3f5"/><path d="M0.7 53.3L44.7 43.3L84.7 21.3L124.7 3.3" fill="none" stroke="#ffffff" stroke-width="1.5" stroke-linejoin="round" stroke-linecap="round" opacity="0.9"/><path d="M0.7 98.3L64.7 73.3L124.7 45.3L184.7 18.3L224.7 3.3" fill="none" stroke="#ffffff" stroke-width="1.5" stroke-linejoin="round" stroke-linecap="round" opacity="0.9"/><path d="M44.7 138.3L104.7 108.3L164.7 73.3L224.7 43.3L294.7 23.3" fill="none" stroke="#ffffff" stroke-width="1.5" stroke-linejoin="round" stroke-linecap="round" opacity="0.9"/><path d="M84.7 3.3L104.7 33.3L124.7 73.3L154.7 123.3" fill="none" stroke="#ffffff" stroke-width="1.5" stroke-linejoin="round" stroke-linecap="round" opacity="0.9"/><path d="M134.7 3.3L154.7 43.3L174.7 83.3L194.7 123.3" fill="none" stroke="#ffffff" stroke-width="1.5" stroke-linejoin="round" stroke-linecap="round" opacity="0.9"/><path d="M0.7 173.3L84.7 173.3L224.7 173.3L324.7 175.3" fill="none" stroke="#ffffff" stroke-width="1.5" stroke-linejoin="round" stroke-linecap="round" opacity="0.9"/><path d="M0.7 318.3L84.7 316.3L164.7 315.3" fill="none" stroke="#ffffff" stroke-width="1.5" stroke-linejoin="round" stroke-linecap="round" opacity="0.9"/><path d="M0.7 378.3L84.7 378.3L160.7 375.3" fill="none" stroke="#ffffff" stroke-width="1.5" stroke-linejoin="round" stroke-linecap="round" opacity="0.9"/><path d="M0.7 413.3L84.7 415.3L164.7 417.3L224.7 417.3" fill="none" stroke="#ffffff" stroke-width="1.5" stroke-linejoin="round" stroke-linecap="round" opacity="0.9"/><path d="M24.7 138.3L24.7 283.3L26.7 443.3" fill="none" stroke="#ffffff" stroke-width="1.5" stroke-linejoin="round" stroke-linecap="round" opacity="0.9"/><path d="M84.7 138.3L86.7 443.3" fill="none" stroke="#ffffff" stroke-width="1.5" stroke-linejoin="round" stroke-linecap="round" opacity="0.9"/><path d="M124.7 138.3L126.7 463.3" fill="none" stroke="#ffffff" stroke-width="1.5" stroke-linejoin="round" stroke-linecap="round" opacity="0.9"/><path d="M184.7 173.3L186.7 383.3" fill="none" stroke="#ffffff" stroke-width="1.5" stroke-linejoin="round" stroke-linecap="round" opacity="0.9"/><path d="M264.7 138.3L266.7 468.3" fill="none" stroke="#ffffff" stroke-width="1.5" stroke-linejoin="round" stroke-linecap="round" opacity="0.9"/><path d="M294.7 138.3L296.7 363.3" fill="none" stroke="#ffffff" stroke-width="1.5" stroke-linejoin="round" stroke-linecap="round" opacity="0.9"/><path d="M324.7 83.3L384.7 73.3L424.7 58.3" fill="none" stroke="#ffffff" stroke-width="1.5" stroke-linejoin="round" stroke-linecap="round" opacity="0.9"/><path d="M324.7 113.3L374.7 109.3L419.7 113.3" fill="none" stroke="#ffffff" stroke-width="1.5" stroke-linejoin="round" stroke-linecap="round" opacity="0.9"/><path d="M364.7 3.3L369.7 63.3L374.7 138.3" fill="none" stroke="#ffffff" stroke-width="1.5" stroke-linejoin="round" stroke-linecap="round" opacity="0.9"/><path d="M394.7 138.3L396.7 223.3" fill="none" stroke="#ffffff" stroke-width="1.5" stroke-linejoin="round" stroke-linecap="round" opacity="0.9"/><path d="M334.7 223.3L394.7 221.3L484.7 223.3" fill="none" stroke="#ffffff" stroke-width="1.5" stroke-linejoin="round" stroke-linecap="round" opacity="0.9"/><path d="M334.7 393.3L424.7 393.3L491.7 391.3" fill="none" stroke="#ffffff" stroke-width="1.5" stroke-linejoin="round" stroke-linecap="round" opacity="0.9"/><path d="M334.7 433.3L424.7 435.3L491.7 435.3" fill="none" stroke="#ffffff" stroke-width="1.5" stroke-linejoin="round" stroke-linecap="round" opacity="0.9"/><path d="M364.7 363.3L366.7 471.3" fill="none" stroke="#ffffff" stroke-width="1.5" stroke-linejoin="round" stroke-linecap="round" opacity="0.9"/><path d="M459.7 363.3L461.7 602.3" fill="none" stroke="#ffffff" stroke-width="1.5" stroke-linejoin="round" stroke-linecap="round" opacity="0.9"/><path d="M224.7 523.3L304.7 523.3L374.7 525.3L491.7 527.3" fill="none" stroke="#ffffff" stroke-width="1.5" stroke-linejoin="round" stroke-linecap="round" opacity="0.9"/><path d="M264.7 475.3L266.7 602.3" fill="none" stroke="#ffffff" stroke-width="1.5" stroke-linejoin="round" stroke-linecap="round" opacity="0.9"/><path d="M384.7 483.3L424.7 523.3L459.7 563.3L484.7 602.3" fill="none" stroke="#ffffff" stroke-width="1.5" stroke-linejoin="round" stroke-linecap="round" opacity="0.9"/><path d="M0.7 523.3L64.7 528.3L124.7 523.3L214.7 521.3" fill="none" stroke="#ffffff" stroke-width="1.5" stroke-linejoin="round" stroke-linecap="round" opacity="0.9"/><path d="M0.7 563.3L84.7 573.3L164.7 583.3" fill="none" stroke="#ffffff" stroke-width="1.5" stroke-linejoin="round" stroke-linecap="round" opacity="0.9"/><path d="M164.7 475.3L154.7 523.3L134.7 602.3" fill="none" stroke="#ffffff" stroke-width="1.5" stroke-linejoin="round" stroke-linecap="round" opacity="0.9"/><path d="M24.7 483.3L44.7 523.3L64.7 602.3" fill="none" stroke="#ffffff" stroke-width="1.5" stroke-linejoin="round" stroke-linecap="round" opacity="0.9"/><path d="M324.7 475.3L326.7 602.3" fill="none" stroke="#ffffff" stroke-width="1.5" stroke-linejoin="round" stroke-linecap="round" opacity="0.9"/><path d="M404.7 475.3L384.7 523.3L354.7 563.3L324.7 602.3" fill="none" stroke="#ffffff" stroke-width="1.5" stroke-linejoin="round" stroke-linecap="round" opacity="0.9"/><path d="M180.5 0.3L186.7 63.3L193.4 122.3L199.7 155.3L211.2 216.0L232.2 248.3L238.7 283.3L240.7 301.3" fill="none" stroke="#e9cd88" stroke-width="3.7" stroke-linejoin="round" stroke-linecap="round"/><path d="M180.5 0.3L186.7 63.3L193.4 122.3L199.7 155.3L211.2 216.0L232.2 248.3L238.7 283.3L240.7 301.3" fill="none" stroke="#f8e3a0" stroke-width="2.5" stroke-linejoin="round" stroke-linecap="round"/><path d="M204.7 0.3L214.7 53.3L227.3 106.3L234.7 155.3L241.7 191.8L251.6 248.3L252.7 283.3" fill="none" stroke="#e9cd88" stroke-width="3.7" stroke-linejoin="round" stroke-linecap="round"/><path d="M204.7 0.3L214.7 53.3L227.3 106.3L234.7 155.3L241.7 191.8L251.6 248.3L252.7 283.3" fill="none" stroke="#f8e3a0" stroke-width="2.5" stroke-linejoin="round" stroke-linecap="round"/><path d="M341.7 0.3L335.2 33.3L320.7 74.1L307.7 112.8L291.5 151.3L279.7 175.3L277.7 213.3L265.7 238.3L259.7 268.3L248.7 301.3" fill="none" stroke="#e9cd88" stroke-width="3.7" stroke-linejoin="round" stroke-linecap="round"/><path d="M341.7 0.3L335.2 33.3L320.7 74.1L307.7 112.8L291.5 151.3L279.7 175.3L277.7 213.3L265.7 238.3L259.7 268.3L248.7 301.3" fill="none" stroke="#f8e3a0" stroke-width="2.5" stroke-linejoin="round" stroke-linecap="round"/><path d="M72.7 138.3L80.7 128.3L99.7 123.8L184.7 123.8L289.7 122.8L309.3 122.5L378.7 127.3L386.7 138.7L386.7 175.3L398.2 195.0L400.7 213.3L407.7 232.2L420.7 248.3L422.4 277.3L428.7 295.2L436.1 309.3L436.1 341.8L428.7 357.9L428.1 419.3L422.4 433.8L399.7 451.6L386.4 465.0L374.7 471.6L321.4 472.1L224.7 475.0L152.7 475.0L127.7 458.3L97.7 435.3L69.7 413.3L66.7 343.3L65.7 223.3L67.7 173.3L68.7 151.3L72.7 138.3" fill="none" stroke="#e9cd88" stroke-width="3.7" stroke-linejoin="round" stroke-linecap="round"/><path d="M72.7 138.3L80.7 128.3L99.7 123.8L184.7 123.8L289.7 122.8L309.3 122.5L378.7 127.3L386.7 138.7L386.7 175.3L398.2 195.0L400.7 213.3L407.7 232.2L420.7 248.3L422.4 277.3L428.7 295.2L436.1 309.3L436.1 341.8L428.7 357.9L428.1 419.3L422.4 433.8L399.7 451.6L386.4 465.0L374.7 471.6L321.4 472.1L224.7 475.0L152.7 475.0L127.7 458.3L97.7 435.3L69.7 413.3L66.7 343.3L65.7 223.3L67.7 173.3L68.7 151.3L72.7 138.3" fill="none" stroke="#f8e3a0" stroke-width="2.5" stroke-linejoin="round" stroke-linecap="round"/><path d="M0.7 282.3L84.7 282.8L164.7 283.3L240.7 286.3L284.7 289.3L330.3 291.3L374.7 294.3L424.7 295.3L491.7 283.3" fill="none" stroke="#e9cd88" stroke-width="3.7" stroke-linejoin="round" stroke-linecap="round"/><path d="M0.7 282.3L84.7 282.8L164.7 283.3L240.7 286.3L284.7 289.3L330.3 291.3L374.7 294.3L424.7 295.3L491.7 283.3" fill="none" stroke="#f8e3a0" stroke-width="2.5" stroke-linejoin="round" stroke-linecap="round"/><path d="M10.7 138.3L34.7 163.3L62.6 186.9L85.2 198.3L132.0 230.5L162.7 262.8L161.7 285.3" fill="none" stroke="#e9cd88" stroke-width="3.7" stroke-linejoin="round" stroke-linecap="round"/><path d="M10.7 138.3L34.7 163.3L62.6 186.9L85.2 198.3L132.0 230.5L162.7 262.8L161.7 285.3" fill="none" stroke="#f8e3a0" stroke-width="2.5" stroke-linejoin="round" stroke-linecap="round"/><path d="M51.2 69.3L79.7 95.3L107.7 122.3L129.7 141.3L156.2 161.3L183.7 165.3L224.7 166.3" fill="none" stroke="#e9cd88" stroke-width="3.7" stroke-linejoin="round" stroke-linecap="round"/><path d="M51.2 69.3L79.7 95.3L107.7 122.3L129.7 141.3L156.2 161.3L183.7 165.3L224.7 166.3" fill="none" stroke="#f8e3a0" stroke-width="2.5" stroke-linejoin="round" stroke-linecap="round"/><path d="M161.7 285.3L164.7 258.3L174.7 252.8L232.7 251.8L265.7 256.3L298.0 259.6L324.7 268.3L330.3 291.3L330.3 353.3L319.7 369.3L294.7 381.3L264.7 387.3L224.1 388.6L169.7 388.6L161.2 378.3L161.2 285.3" fill="none" stroke="#e9cd88" stroke-width="3.7" stroke-linejoin="round" stroke-linecap="round"/><path d="M161.7 285.3L164.7 258.3L174.7 252.8L232.7 251.8L265.7 256.3L298.0 259.6L324.7 268.3L330.3 291.3L330.3 353.3L319.7 369.3L294.7 381.3L264.7 387.3L224.1 388.6L169.7 388.6L161.2 378.3L161.2 285.3" fill="none" stroke="#f8e3a0" stroke-width="2.5" stroke-linejoin="round" stroke-linecap="round"/><path d="M240.7 313.3L204.7 328.3L164.7 341.3L128.7 346.6L64.7 351.3L0.7 357.9" fill="none" stroke="#e9cd88" stroke-width="3.7" stroke-linejoin="round" stroke-linecap="round"/><path d="M240.7 313.3L204.7 328.3L164.7 341.3L128.7 346.6L64.7 351.3L0.7 357.9" fill="none" stroke="#f8e3a0" stroke-width="2.5" stroke-linejoin="round" stroke-linecap="round"/><path d="M128.7 346.6L104.7 371.3L85.2 390.3L59.3 416.1L27.0 448.3L0.7 468.3" fill="none" stroke="#e9cd88" stroke-width="3.7" stroke-linejoin="round" stroke-linecap="round"/><path d="M128.7 346.6L104.7 371.3L85.2 390.3L59.3 416.1L27.0 448.3L0.7 468.3" fill="none" stroke="#f8e3a0" stroke-width="2.5" stroke-linejoin="round" stroke-linecap="round"/><path d="M196.7 380.3L172.4 406.3L140.1 427.3L91.7 448.3L69.7 458.3L36.4 445.0L0.7 453.3" fill="none" stroke="#e9cd88" stroke-width="3.7" stroke-linejoin="round" stroke-linecap="round"/><path d="M196.7 380.3L172.4 406.3L140.1 427.3L91.7 448.3L69.7 458.3L36.4 445.0L0.7 453.3" fill="none" stroke="#f8e3a0" stroke-width="2.5" stroke-linejoin="round" stroke-linecap="round"/><path d="M224.1 388.3L221.7 443.3L221.4 476.3L221.4 560.0L207.7 593.3L204.7 602.3" fill="none" stroke="#e9cd88" stroke-width="3.7" stroke-linejoin="round" stroke-linecap="round"/><path d="M224.1 388.3L221.7 443.3L221.4 476.3L221.4 560.0L207.7 593.3L204.7 602.3" fill="none" stroke="#f8e3a0" stroke-width="2.5" stroke-linejoin="round" stroke-linecap="round"/><path d="M28.0 481.6L58.0 501.6L78.0 533.3L111.4 541.6L161.4 571.6L203.0 590.0L227.7 600.0" fill="none" stroke="#e9cd88" stroke-width="3.7" stroke-linejoin="round" stroke-linecap="round"/><path d="M28.0 481.6L58.0 501.6L78.0 533.3L111.4 541.6L161.4 571.6L203.0 590.0L227.7 600.0" fill="none" stroke="#f8e3a0" stroke-width="2.5" stroke-linejoin="round" stroke-linecap="round"/><path d="M113.7 476.3L113.7 513.3L118.0 536.3" fill="none" stroke="#e9cd88" stroke-width="3.7" stroke-linejoin="round" stroke-linecap="round"/><path d="M113.7 476.3L113.7 513.3L118.0 536.3" fill="none" stroke="#f8e3a0" stroke-width="2.5" stroke-linejoin="round" stroke-linecap="round"/><path d="M244.7 315.3L274.7 343.3L306.1 370.8L335.2 406.3L357.7 438.7L386.4 468.3L411.4 498.3L438.0 531.6L478.0 600.0" fill="none" stroke="#e9cd88" stroke-width="3.7" stroke-linejoin="round" stroke-linecap="round"/><path d="M244.7 315.3L274.7 343.3L306.1 370.8L335.2 406.3L357.7 438.7L386.4 468.3L411.4 498.3L438.0 531.6L478.0 600.0" fill="none" stroke="#f8e3a0" stroke-width="2.5" stroke-linejoin="round" stroke-linecap="round"/><path d="M329.7 357.9L384.7 355.3L428.7 357.9L491.7 357.3" fill="none" stroke="#e9cd88" stroke-width="3.7" stroke-linejoin="round" stroke-linecap="round"/><path d="M329.7 357.9L384.7 355.3L428.7 357.9L491.7 357.3" fill="none" stroke="#f8e3a0" stroke-width="2.5" stroke-linejoin="round" stroke-linecap="round"/><path d="M309.7 473.3L309.7 513.3L338.0 560.0L346.4 573.3L346.4 602.3" fill="none" stroke="#e9cd88" stroke-width="3.7" stroke-linejoin="round" stroke-linecap="round"/><path d="M309.7 473.3L309.7 513.3L338.0 560.0L346.4 573.3L346.4 602.3" fill="none" stroke="#f8e3a0" stroke-width="2.5" stroke-linejoin="round" stroke-linecap="round"/><path d="M330.3 288.7L349.7 271.3L377.2 253.2L406.3 233.8L446.7 211.2L491.7 193.3" fill="none" stroke="#e9cd88" stroke-width="3.7" stroke-linejoin="round" stroke-linecap="round"/><path d="M330.3 288.7L349.7 271.3L377.2 253.2L406.3 233.8L446.7 211.2L491.7 193.3" fill="none" stroke="#f8e3a0" stroke-width="2.5" stroke-linejoin="round" stroke-linecap="round"/><path d="M-1.3 5.3L18.7 7.8L43.2 7.0L56.7 -0.7" fill="none" stroke="#e9cd88" stroke-width="3.7" stroke-linejoin="round" stroke-linecap="round"/><path d="M-1.3 5.3L18.7 7.8L43.2 7.0L56.7 -0.7" fill="none" stroke="#f8e3a0" stroke-width="2.5" stroke-linejoin="round" stroke-linecap="round"/><path d="M0.7 158.3L14.7 145.3" fill="none" stroke="#e9cd88" stroke-width="3.7" stroke-linejoin="round" stroke-linecap="round"/><path d="M0.7 158.3L14.7 145.3" fill="none" stroke="#f8e3a0" stroke-width="2.5" stroke-linejoin="round" stroke-linecap="round"/><path d="M240.7 301.3L224.7 353.3L214.7 388.3" fill="none" stroke="#e9cd88" stroke-width="3.7" stroke-linejoin="round" stroke-linecap="round"/><path d="M240.7 301.3L224.7 353.3L214.7 388.3" fill="none" stroke="#f8e3a0" stroke-width="2.5" stroke-linejoin="round" stroke-linecap="round"/></g><text x="74.7" y="16.3" font-size="14" fill="#414141" text-anchor="start" letter-spacing="0.2" stroke="#f4f2ec" stroke-width="2.400" paint-order="stroke" stroke-linejoin="round">Klein</text><text x="176.2" y="45.3" font-size="14" fill="#414141" text-anchor="start" letter-spacing="0.2" stroke="#f4f2ec" stroke-width="2.400" paint-order="stroke" stroke-linejoin="round">Westfield</text><text x="46.2" y="58.8" font-size="14" fill="#414141" text-anchor="start" letter-spacing="0.2" stroke="#f4f2ec" stroke-width="2.400" paint-order="stroke" stroke-linejoin="round">ouetta</text><text x="307.2" y="67.3" font-size="14" fill="#414141" text-anchor="start" letter-spacing="0.2" stroke="#f4f2ec" stroke-width="2.400" paint-order="stroke" stroke-linejoin="round">Humble</text><text x="373.7" y="67.3" font-size="14" fill="#414141" text-anchor="start" letter-spacing="0.2" stroke="#f4f2ec" stroke-width="2.400" paint-order="stroke" stroke-linejoin="round">Atascocita</text><text x="461.7" y="38.8" font-size="14" fill="#414141" text-anchor="start" letter-spacing="0.2" stroke="#f4f2ec" stroke-width="2.400" paint-order="stroke" stroke-linejoin="round">Huff</text><text x="187.7" y="167.8" font-size="14" fill="#414141" text-anchor="start" letter-spacing="0.2" stroke="#f4f2ec" stroke-width="2.400" paint-order="stroke" stroke-linejoin="round">Aldine</text><text x="316.7" y="168.3" font-size="14" fill="#414141" text-anchor="start" letter-spacing="0.2" stroke="#f4f2ec" stroke-width="2.400" paint-order="stroke" stroke-linejoin="round">Dyersdale</text><text x="17.7" y="181.8" font-size="14" fill="#414141" text-anchor="start" letter-spacing="0.2" stroke="#f4f2ec" stroke-width="2.400" paint-order="stroke" stroke-linejoin="round">Jersey Village</text><text x="425.2" y="202.3" font-size="14" fill="#414141" text-anchor="start" letter-spacing="0.2" stroke="#f4f2ec" stroke-width="2.400" paint-order="stroke" stroke-linejoin="round">Sheldon</text><text x="487.7" y="167.3" font-size="14" fill="#414141" text-anchor="start" letter-spacing="0.2" stroke="#f4f2ec" stroke-width="2.400" paint-order="stroke" stroke-linejoin="round">C</text><text x="487.7" y="191.3" font-size="14" fill="#414141" text-anchor="start" letter-spacing="0.2" stroke="#f4f2ec" stroke-width="2.400" paint-order="stroke" stroke-linejoin="round">E</text><text x="487.7" y="251.3" font-size="14" fill="#414141" text-anchor="start" letter-spacing="0.2" stroke="#f4f2ec" stroke-width="2.400" paint-order="stroke" stroke-linejoin="round">H</text><text x="92.7" y="300.3" font-size="14" fill="#414141" text-anchor="start" letter-spacing="0.2" stroke="#f4f2ec" stroke-width="2.400" paint-order="stroke" stroke-linejoin="round">Hunters</text><text x="75.7" y="315.3" font-size="14" fill="#414141" text-anchor="start" letter-spacing="0.2" stroke="#f4f2ec" stroke-width="2.400" paint-order="stroke" stroke-linejoin="round">Creek Village</text><text x="321.2" y="341.3" font-size="14" fill="#414141" text-anchor="start" letter-spacing="0.2" stroke="#f4f2ec" stroke-width="2.400" paint-order="stroke" stroke-linejoin="round">Galena Park</text><text x="353.7" y="378.3" font-size="14" fill="#414141" text-anchor="start" letter-spacing="0.2" stroke="#f4f2ec" stroke-width="2.400" paint-order="stroke" stroke-linejoin="round">Pasadena</text><text x="424.2" y="369.3" font-size="14" fill="#414141" text-anchor="start" letter-spacing="0.2" stroke="#f4f2ec" stroke-width="2.400" paint-order="stroke" stroke-linejoin="round">Deer Park</text><text x="307.7" y="413.8" font-size="14" fill="#414141" text-anchor="start" letter-spacing="0.2" stroke="#f4f2ec" stroke-width="2.400" paint-order="stroke" stroke-linejoin="round">South Houston</text><text x="8.7" y="418.3" font-size="14" fill="#414141" text-anchor="start" letter-spacing="0.2" stroke="#f4f2ec" stroke-width="2.400" paint-order="stroke" stroke-linejoin="round">Meadows</text><text x="22.2" y="433.3" font-size="14" fill="#414141" text-anchor="start" letter-spacing="0.2" stroke="#f4f2ec" stroke-width="2.400" paint-order="stroke" stroke-linejoin="round">Place</text><text x="1.2" y="382.3" font-size="14" fill="#414141" text-anchor="start" letter-spacing="0.2" stroke="#f4f2ec" stroke-width="2.400" paint-order="stroke" stroke-linejoin="round">nd</text><text x="0.7" y="401.3" font-size="14" fill="#414141" text-anchor="start" letter-spacing="0.2" stroke="#f4f2ec" stroke-width="2.400" paint-order="stroke" stroke-linejoin="round">ers</text><text x="1.2" y="478.3" font-size="14" fill="#414141" text-anchor="start" letter-spacing="0.2" stroke="#f4f2ec" stroke-width="2.400" paint-order="stroke" stroke-linejoin="round">ar Land</text><text x="52.7" y="476.3" font-size="14" fill="#414141" text-anchor="start" letter-spacing="0.2" stroke="#f4f2ec" stroke-width="2.400" paint-order="stroke" stroke-linejoin="round">Missouri City</text><text x="282.7" y="515.8" font-size="14" fill="#414141" text-anchor="start" letter-spacing="0.2" stroke="#f4f2ec" stroke-width="2.400" paint-order="stroke" stroke-linejoin="round">Pearland</text><text x="144.2" y="540.8" font-size="14" fill="#414141" text-anchor="start" letter-spacing="0.2" stroke="#f4f2ec" stroke-width="2.400" paint-order="stroke" stroke-linejoin="round">Fresno</text><text x="344.7" y="550.8" font-size="14" fill="#414141" text-anchor="start" letter-spacing="0.2" stroke="#f4f2ec" stroke-width="2.400" paint-order="stroke" stroke-linejoin="round">Friendswood</text><text x="91.2" y="594.8" font-size="14" fill="#414141" text-anchor="start" letter-spacing="0.2" stroke="#f4f2ec" stroke-width="2.400" paint-order="stroke" stroke-linejoin="round">Sienna</text><text x="0.7" y="544.3" font-size="14" fill="#414141" text-anchor="start" letter-spacing="0.2" stroke="#f4f2ec" stroke-width="2.400" paint-order="stroke" stroke-linejoin="round">n</text><text x="0.7" y="590.8" font-size="14" fill="#414141" text-anchor="start" letter-spacing="0.2" stroke="#f4f2ec" stroke-width="2.400" paint-order="stroke" stroke-linejoin="round">ps</text><text x="445.2" y="576.8" font-size="14" fill="#414141" text-anchor="start" letter-spacing="0.2" stroke="#f4f2ec" stroke-width="2.400" paint-order="stroke" stroke-linejoin="round">League</text><text x="162.7" y="341.3" font-size="14" fill="#414141" text-anchor="start" letter-spacing="0.2" stroke="#f4f2ec" stroke-width="2.400" paint-order="stroke" stroke-linejoin="round">West</text><text x="146.7" y="356.3" font-size="14" fill="#414141" text-anchor="start" letter-spacing="0.2" stroke="#f4f2ec" stroke-width="2.400" paint-order="stroke" stroke-linejoin="round">University</text><text x="159.2" y="370.8" font-size="14" fill="#414141" text-anchor="start" letter-spacing="0.2" stroke="#f4f2ec" stroke-width="2.400" paint-order="stroke" stroke-linejoin="round">Place</text><text x="189.2" y="317.8" font-size="24" fill="#222" letter-spacing="0.900" stroke="#f4f2ec" stroke-width="3.200" paint-order="stroke" stroke-linejoin="round">Houston</text><text x="189.2" y="317.8" font-size="24" fill="#222" letter-spacing="0.900" stroke="#222" stroke-width=".8">Houston</text><path d="M177.7 59.8q4.6 2 9.2 0q4.6 2 9.2 0v8.500c0 5-8.2 9-9.2 10.500c-1-1.500-9.2-5.500-9.2-10.500z" fill="#3f6cc2" stroke="#fff" stroke-width="1"/><path d="M177.7 59.8q4.6 2 9.2 0q4.6 2 9.2 0v4.300h-18.5z" fill="#d04a3f"/><text x="186.9" y="74.5" font-size="10.500" font-weight="700" fill="#fff" text-anchor="middle">45</text><path d="M281.0 142.8q4.6 2 9.2 0q4.6 2 9.2 0v8.500c0 5-8.2 9-9.2 10.500c-1-1.500-9.2-5.500-9.2-10.500z" fill="#3f6cc2" stroke="#fff" stroke-width="1"/><path d="M281.0 142.8q4.6 2 9.2 0q4.6 2 9.2 0v4.300h-18.5z" fill="#d04a3f"/><text x="290.2" y="157.5" font-size="10.500" font-weight="700" fill="#fff" text-anchor="middle">69</text><path d="M208.0 219.8q4.6 2 9.2 0q4.6 2 9.2 0v8.500c0 5-8.2 9-9.2 10.500c-1-1.500-9.2-5.500-9.2-10.500z" fill="#3f6cc2" stroke="#fff" stroke-width="1"/><path d="M208.0 219.8q4.6 2 9.2 0q4.6 2 9.2 0v4.300h-18.5z" fill="#d04a3f"/><text x="217.2" y="234.5" font-size="10.500" font-weight="700" fill="#fff" text-anchor="middle">45</text><path d="M275.7 247.8q5.2 2 10.5 0q5.2 2 10.5 0v8.500c0 5-9.5 9-10.5 10.500c-1-1.500-10.5-5.500-10.5-10.500z" fill="#3f6cc2" stroke="#fff" stroke-width="1"/><path d="M275.7 247.8q5.2 2 10.5 0q5.2 2 10.5 0v4.300h-21z" fill="#d04a3f"/><text x="286.2" y="262.5" font-size="10.500" font-weight="700" fill="#fff" text-anchor="middle">610</text><path d="M32.0 272.3q4.6 2 9.2 0q4.6 2 9.2 0v8.500c0 5-8.2 9-9.2 10.500c-1-1.500-9.2-5.500-9.2-10.500z" fill="#3f6cc2" stroke="#fff" stroke-width="1"/><path d="M32.0 272.3q4.6 2 9.2 0q4.6 2 9.2 0v4.300h-18.5z" fill="#d04a3f"/><text x="41.2" y="287.0" font-size="10.500" font-weight="700" fill="#fff" text-anchor="middle">10</text><path d="M112.5 345.8q4.6 2 9.2 0q4.6 2 9.2 0v8.500c0 5-8.2 9-9.2 10.500c-1-1.500-9.2-5.500-9.2-10.500z" fill="#3f6cc2" stroke="#fff" stroke-width="1"/><path d="M112.5 345.8q4.6 2 9.2 0q4.6 2 9.2 0v4.300h-18.5z" fill="#d04a3f"/><text x="121.7" y="360.5" font-size="10.500" font-weight="700" fill="#fff" text-anchor="middle">69</text><path d="M179.7 380.8q5.2 2 10.5 0q5.2 2 10.5 0v8.500c0 5-9.5 9-10.5 10.500c-1-1.500-10.5-5.500-10.5-10.500z" fill="#3f6cc2" stroke="#fff" stroke-width="1"/><path d="M179.7 380.8q5.2 2 10.5 0q5.2 2 10.5 0v4.300h-21z" fill="#d04a3f"/><text x="190.2" y="395.5" font-size="10.500" font-weight="700" fill="#fff" text-anchor="middle">610</text><path d="M319.7 303.8q5.2 2 10.5 0q5.2 2 10.5 0v8.500c0 5-9.5 9-10.5 10.500c-1-1.500-10.5-5.500-10.5-10.500z" fill="#3f6cc2" stroke="#fff" stroke-width="1"/><path d="M319.7 303.8q5.2 2 10.5 0q5.2 2 10.5 0v4.300h-21z" fill="#d04a3f"/><text x="330.2" y="318.5" font-size="10.500" font-weight="700" fill="#fff" text-anchor="middle">610</text><rect x="50.2" y="77.8" width="24" height="15" rx="7" fill="#fff" stroke="#6b6b6b" stroke-width="1.200"/><text x="62.2" y="88.9" font-size="10" fill="#444" text-anchor="middle">249</text><rect x="169.7" y="468.8" width="17" height="15" rx="7" fill="#fff" stroke="#6b6b6b" stroke-width="1.200"/><text x="178.2" y="479.9" font-size="10" fill="#444" text-anchor="middle">8</text><rect x="201.2" y="475.3" width="24" height="15" rx="7" fill="#fff" stroke="#6b6b6b" stroke-width="1.200"/><text x="213.2" y="486.4" font-size="10" fill="#444" text-anchor="middle">288</text><rect x="91.7" y="531.8" width="18" height="15" rx="7" fill="#fff" stroke="#6b6b6b" stroke-width="1.200"/><text x="100.7" y="542.9" font-size="10" fill="#444" text-anchor="middle">6</text><rect x="345.2" y="463.8" width="17" height="15" rx="7" fill="#fff" stroke="#6b6b6b" stroke-width="1.200"/><text x="353.7" y="474.9" font-size="10" fill="#444" text-anchor="middle">8</text><rect x="315.7" y="530.3" width="20" height="15" rx="7" fill="#fff" stroke="#6b6b6b" stroke-width="1.200"/><text x="325.7" y="541.4" font-size="10" fill="#444" text-anchor="middle">35</text><rect x="190.7" y="594.8" width="24" height="15" rx="7" fill="#fff" stroke="#6b6b6b" stroke-width="1.200"/><text x="202.7" y="605.9" font-size="10" fill="#444" text-anchor="middle">288</text><path d="M423.2 214.8l3-2 3 1.500 3-1.500 3 1.500 3-1.500 3 2c-1 2-1 4 0 6 0 5-5 7-9 9-4-2-9-4-9-9 1-2 1-4 0-6z" fill="#fff" stroke="#6b6b6b" stroke-width="1.100"/><text x="432.2" y="225.8" font-size="10" fill="#444" text-anchor="middle">90</text><path d="M152.2 420.3l3-2 3 1.500 3-1.500 3 1.500 3-1.500 3 2c-1 2-1 4 0 6 0 5-5 7-9 9-4-2-9-4-9-9 1-2 1-4 0-6z" fill="#fff" stroke="#6b6b6b" stroke-width="1.100"/><text x="161.2" y="431.3" font-size="10" fill="#444" text-anchor="middle">90</text><path d="M81.2 192.3l3-2 3 1.500 3-1.500 3 1.500 3-1.500 3 2c-1 2-1 4 0 6 0 5-5 7-9 9-4-2-9-4-9-9 1-2 1-4 0-6z" fill="#fff" stroke="#6b6b6b" stroke-width="1.100"/><text x="90.2" y="203.3" font-size="10" fill="#444" text-anchor="middle">290</text><rect x="152.20000000000005" y="401.3" width="18" height="10.500" fill="#fff" stroke="#6b6b6b" stroke-width="1"/><text x="161.20000000000005" y="409.8" font-size="8" font-weight="700" fill="#444" text-anchor="middle">ALT</text><path d="M241.7 298.3L235.4 280.6L232.2 251.5L180.5 251.5L170.7 256.3L163.5 263.7L132.0 230.5L117.5 228.9L114.2 233.8L101.3 233.8L96.5 225.7L85.2 198.3L65.7 188.5L64.2 172.3L68.2 151.6L70.7 138.7L80.3 129.0L98.1 124.2L107.7 123.3L180.5 125.0L196.7 121.7L254.7 122.8L268.9 122.5L268.9 132.3L293.2 132.3L298.0 137.1L291.5 153.0L280.2 175.6L279.4 199.8L277.0 214.3L265.7 238.6L264.9 256.3L298.0 258.8L315.7 263.7L325.5 274.2L336.7 274.2" fill="none" stroke="#ee8a4b" stroke-opacity=".88" stroke-width="5.400" stroke-linejoin="round" stroke-linecap="round"/><path d="M241.7 308.3L250.0 314.3L233.7 333.7L217.7 336.1L156.2 337.7L155.4 343.3L155.4 385.3L159.5 390.3L224.1 389.3L224.9 399.9L211.2 401.5L207.9 409.6L196.7 441.9L217.7 441.9L219.2 435.3L220.7 453.3L221.7 475.3L152.7 475.3L127.7 458.3L91.7 432.3L93.2 414.3L112.7 414.3L112.7 398.3L98.1 398.3L83.6 391.8L69.0 406.3L65.7 404.8L66.7 346.6L64.2 345.0" fill="none" stroke="#6f8fde" stroke-opacity=".85" stroke-width="5.400" stroke-linejoin="round" stroke-linecap="round"/><path d="M241.7 303.3L252.7 300.0L270.5 293.5L304.5 289.5L328.7 291.1L330.3 303.3L329.5 357.9L322.2 366.0L309.3 371.7L283.5 372.5L280.2 375.7L288.3 383.8L306.1 384.6L308.5 390.3L307.7 435.5L312.6 453.3L311.4 465.0L321.4 471.6L374.7 471.6L386.4 465.0L411.4 443.3L422.4 433.8L428.1 419.3L401.4 419.3L400.6 412.8L412.7 412.8L412.7 369.3" fill="none" stroke="#93c74d" stroke-opacity=".88" stroke-width="5.400" stroke-linejoin="round" stroke-linecap="round"/><path d="M428.1 419.3L428.7 357.9L436.1 341.8L436.1 309.3L433.7 298.1L428.7 295.2L422.4 277.3L420.7 248.3L407.7 232.2L396.6 238.6" fill="none" stroke="#93c74d" stroke-opacity=".88" stroke-width="5.400" stroke-linejoin="round" stroke-linecap="round"/><path d="M428.7 296.3L443.4 288.7" fill="none" stroke="#93c74d" stroke-opacity=".88" stroke-width="5.400" stroke-linejoin="round" stroke-linecap="round"/><rect x="232.5" y="287.8" width="20.500" height="21.500" rx="2.500" fill="#fff" stroke="#666" stroke-width="1"/><path transform="translate(237.0 292.3) scale(.72)" fill="#444" d="M8 1.200 1.200 6.800V15h4.300v-4.600a2.500 2.500 0 0 1 5 0V15h4.300V6.800z"/><path d="M96.9 95.5h22a2.500 2.500 0 0 1 2.500 2.500v16a2.500 2.500 0 0 1-2.500 2.500h-7.0l-4 4.300-4-4.300h-7.0a2.500 2.500 0 0 1-2.500-2.500v-16a2.500 2.500 0 0 1 2.500-2.500z" fill="#f0672b" stroke="#c9501a" stroke-width="1"/><text x="107.9" y="110.6" font-size="13" font-weight="700" fill="#fff" text-anchor="middle">5</text><path d="M165.8 94.6h22a2.500 2.500 0 0 1 2.500 2.500v16a2.500 2.500 0 0 1-2.500 2.500h-7.0l-4 4.300-4-4.300h-7.0a2.500 2.500 0 0 1-2.500-2.500v-16a2.500 2.500 0 0 1 2.500-2.500z" fill="#f0672b" stroke="#c9501a" stroke-width="1"/><text x="176.8" y="109.7" font-size="13" font-weight="700" fill="#fff" text-anchor="middle">6</text><path d="M233.7 94.9h22a2.500 2.500 0 0 1 2.500 2.500v16a2.500 2.500 0 0 1-2.500 2.500h-7.0l-4 4.300-4-4.300h-7.0a2.500 2.500 0 0 1-2.500-2.500v-16a2.500 2.500 0 0 1 2.500-2.500z" fill="#f0672b" stroke="#c9501a" stroke-width="1"/><text x="244.7" y="110.0" font-size="13" font-weight="700" fill="#fff" text-anchor="middle">7</text><path d="M280.1 109.6h22a2.500 2.500 0 0 1 2.500 2.500v16a2.500 2.500 0 0 1-2.500 2.500h-7.0l-4 4.300-4-4.300h-7.0a2.500 2.500 0 0 1-2.500-2.500v-16a2.500 2.500 0 0 1 2.500-2.500z" fill="#f0672b" stroke="#c9501a" stroke-width="1"/><text x="291.1" y="124.7" font-size="13" font-weight="700" fill="#fff" text-anchor="middle">8</text><path d="M55.9 149.4h22a2.500 2.500 0 0 1 2.500 2.500v16a2.500 2.500 0 0 1-2.500 2.500h-7.0l-4 4.300-4-4.300h-7.0a2.500 2.500 0 0 1-2.500-2.500v-16a2.500 2.500 0 0 1 2.500-2.500z" fill="#f0672b" stroke="#c9501a" stroke-width="1"/><text x="66.9" y="164.5" font-size="13" font-weight="700" fill="#fff" text-anchor="middle">4</text><path d="M267.2 176.0h22a2.500 2.500 0 0 1 2.500 2.500v16a2.500 2.500 0 0 1-2.500 2.500h-7.0l-4 4.300-4-4.300h-7.0a2.500 2.500 0 0 1-2.500-2.500v-16a2.500 2.500 0 0 1 2.500-2.500z" fill="#f0672b" stroke="#c9501a" stroke-width="1"/><text x="278.2" y="191.1" font-size="13" font-weight="700" fill="#fff" text-anchor="middle">9</text><path d="M86.6 201.0h22a2.500 2.500 0 0 1 2.500 2.500v16a2.500 2.500 0 0 1-2.500 2.500h-7.0l-4 4.300-4-4.300h-7.0a2.500 2.500 0 0 1-2.500-2.500v-16a2.500 2.500 0 0 1 2.500-2.500z" fill="#f0672b" stroke="#c9501a" stroke-width="1"/><text x="97.6" y="216.1" font-size="13" font-weight="700" fill="#fff" text-anchor="middle">3</text><path d="M263.5 212.3h22a2.500 2.500 0 0 1 2.500 2.500v16a2.500 2.500 0 0 1-2.500 2.500h-7.0l-4 4.300-4-4.300h-7.0a2.500 2.500 0 0 1-2.500-2.500v-16a2.500 2.500 0 0 1 2.500-2.500z" fill="#f0672b" stroke="#c9501a" stroke-width="1"/><text x="274.5" y="227.4" font-size="13" font-weight="700" fill="#fff" text-anchor="middle">10</text><path d="M157.7 231.7h22a2.500 2.500 0 0 1 2.500 2.500v16a2.500 2.500 0 0 1-2.500 2.500h-7.0l-4 4.300-4-4.300h-7.0a2.500 2.500 0 0 1-2.500-2.500v-16a2.500 2.500 0 0 1 2.500-2.500z" fill="#f0672b" stroke="#c9501a" stroke-width="1"/><text x="168.7" y="246.8" font-size="13" font-weight="700" fill="#fff" text-anchor="middle">2</text><path d="M193.0 223.9h22a2.500 2.500 0 0 1 2.500 2.500v16a2.500 2.500 0 0 1-2.500 2.500h-7.0l-4 4.300-4-4.300h-7.0a2.500 2.500 0 0 1-2.500-2.500v-16a2.500 2.500 0 0 1 2.500-2.500z" fill="#f0672b" stroke="#c9501a" stroke-width="1"/><text x="204.0" y="239.0" font-size="13" font-weight="700" fill="#fff" text-anchor="middle">1</text><path d="M323.9 248.3h22a2.500 2.500 0 0 1 2.500 2.500v16a2.500 2.500 0 0 1-2.500 2.500h-7.0l-4 4.300-4-4.300h-7.0a2.500 2.500 0 0 1-2.500-2.500v-16a2.500 2.500 0 0 1 2.500-2.500z" fill="#f0672b" stroke="#c9501a" stroke-width="1"/><text x="334.9" y="263.4" font-size="13" font-weight="700" fill="#fff" text-anchor="middle">11</text><path d="M53.5 320.3h22a2.500 2.500 0 0 1 2.500 2.500v16a2.500 2.500 0 0 1-2.500 2.500h-7.0l-4 4.300-4-4.300h-7.0a2.500 2.500 0 0 1-2.500-2.500v-16a2.500 2.500 0 0 1 2.500-2.500z" fill="#4a76e8" stroke="#3258c8" stroke-width="1"/><text x="64.5" y="335.4" font-size="13" font-weight="700" fill="#fff" text-anchor="middle">10</text><path d="M161.1 311.2h22a2.500 2.500 0 0 1 2.500 2.500v16a2.500 2.500 0 0 1-2.500 2.500h-7.0l-4 4.300-4-4.300h-7.0a2.500 2.500 0 0 1-2.500-2.500v-16a2.500 2.500 0 0 1 2.500-2.500z" fill="#4a76e8" stroke="#3258c8" stroke-width="1"/><text x="172.1" y="326.3" font-size="13" font-weight="700" fill="#fff" text-anchor="middle">2</text><path d="M198.9 309.3h22a2.500 2.500 0 0 1 2.500 2.500v16a2.500 2.500 0 0 1-2.500 2.500h-7.0l-4 4.300-4-4.300h-7.0a2.500 2.500 0 0 1-2.500-2.500v-16a2.500 2.500 0 0 1 2.500-2.500z" fill="#4a76e8" stroke="#3258c8" stroke-width="1"/><text x="209.9" y="324.4" font-size="13" font-weight="700" fill="#fff" text-anchor="middle">1</text><path d="M152.0 352.0h22a2.500 2.500 0 0 1 2.500 2.500v16a2.500 2.500 0 0 1-2.500 2.500h-7.0l-4 4.300-4-4.300h-7.0a2.500 2.500 0 0 1-2.500-2.500v-16a2.500 2.500 0 0 1 2.500-2.500z" fill="#4a76e8" stroke="#3258c8" stroke-width="1"/><text x="163.0" y="367.1" font-size="13" font-weight="700" fill="#fff" text-anchor="middle">3</text><path d="M202.8 361.7h22a2.500 2.500 0 0 1 2.500 2.500v16a2.500 2.500 0 0 1-2.500 2.500h-7.0l-4 4.300-4-4.300h-7.0a2.500 2.500 0 0 1-2.500-2.500v-16a2.500 2.500 0 0 1 2.500-2.500z" fill="#4a76e8" stroke="#3258c8" stroke-width="1"/><text x="213.8" y="376.8" font-size="13" font-weight="700" fill="#fff" text-anchor="middle">4</text><path d="M98.7 374.9h22a2.500 2.500 0 0 1 2.500 2.500v16a2.500 2.500 0 0 1-2.500 2.500h-7.0l-4 4.300-4-4.300h-7.0a2.500 2.500 0 0 1-2.500-2.500v-16a2.500 2.500 0 0 1 2.500-2.500z" fill="#4a76e8" stroke="#3258c8" stroke-width="1"/><text x="109.7" y="390.0" font-size="13" font-weight="700" fill="#fff" text-anchor="middle">9</text><path d="M202.8 412.1h22a2.500 2.500 0 0 1 2.500 2.500v16a2.500 2.500 0 0 1-2.500 2.500h-7.0l-4 4.300-4-4.300h-7.0a2.500 2.500 0 0 1-2.500-2.500v-16a2.500 2.500 0 0 1 2.500-2.500z" fill="#4a76e8" stroke="#3258c8" stroke-width="1"/><text x="213.8" y="427.2" font-size="13" font-weight="700" fill="#fff" text-anchor="middle">5</text><path d="M119.4 432.8h22a2.500 2.500 0 0 1 2.500 2.500v16a2.500 2.500 0 0 1-2.500 2.500h-7.0l-4 4.300-4-4.300h-7.0a2.500 2.500 0 0 1-2.500-2.500v-16a2.500 2.500 0 0 1 2.500-2.500z" fill="#4a76e8" stroke="#3258c8" stroke-width="1"/><text x="130.4" y="447.9" font-size="13" font-weight="700" fill="#fff" text-anchor="middle">8</text><path d="M166.2 449.6h22a2.500 2.500 0 0 1 2.500 2.500v16a2.500 2.500 0 0 1-2.500 2.500h-7.0l-4 4.300-4-4.300h-7.0a2.500 2.500 0 0 1-2.500-2.500v-16a2.500 2.500 0 0 1 2.500-2.500z" fill="#4a76e8" stroke="#3258c8" stroke-width="1"/><text x="177.2" y="464.7" font-size="13" font-weight="700" fill="#fff" text-anchor="middle">7</text><path d="M199.9 448.3h22a2.500 2.500 0 0 1 2.500 2.500v16a2.500 2.500 0 0 1-2.500 2.500h-7.0l-4 4.300-4-4.300h-7.0a2.500 2.500 0 0 1-2.500-2.500v-16a2.500 2.500 0 0 1 2.500-2.500z" fill="#4a76e8" stroke="#3258c8" stroke-width="1"/><text x="210.9" y="463.4" font-size="13" font-weight="700" fill="#fff" text-anchor="middle">6</text><path d="M388.7 208.8h22a2.500 2.500 0 0 1 2.500 2.500v16a2.500 2.500 0 0 1-2.500 2.500h-7.0l-4 4.300-4-4.300h-7.0a2.500 2.500 0 0 1-2.500-2.500v-16a2.500 2.500 0 0 1 2.500-2.500z" fill="#7aad22" stroke="#5f8c17" stroke-width="1"/><text x="399.7" y="223.9" font-size="13" font-weight="700" fill="#fff" text-anchor="middle">8</text><path d="M429.4 264.6h22a2.500 2.500 0 0 1 2.500 2.500v16a2.500 2.500 0 0 1-2.500 2.500h-7.0l-4 4.300-4-4.300h-7.0a2.500 2.500 0 0 1-2.500-2.500v-16a2.500 2.500 0 0 1 2.500-2.500z" fill="#7aad22" stroke="#5f8c17" stroke-width="1"/><text x="440.4" y="279.7" font-size="13" font-weight="700" fill="#fff" text-anchor="middle">7</text><path d="M259.4 268.3h22a2.500 2.500 0 0 1 2.500 2.500v16a2.500 2.500 0 0 1-2.500 2.500h-7.0l-4 4.300-4-4.300h-7.0a2.500 2.500 0 0 1-2.500-2.500v-16a2.500 2.500 0 0 1 2.500-2.500z" fill="#7aad22" stroke="#5f8c17" stroke-width="1"/><text x="270.4" y="283.4" font-size="13" font-weight="700" fill="#fff" text-anchor="middle">1</text><path d="M298.8 342.9h22a2.500 2.500 0 0 1 2.500 2.500v16a2.500 2.500 0 0 1-2.500 2.500h-7.0l-4 4.300-4-4.300h-7.0a2.500 2.500 0 0 1-2.500-2.500v-16a2.500 2.500 0 0 1 2.500-2.500z" fill="#7aad22" stroke="#5f8c17" stroke-width="1"/><text x="309.8" y="358.0" font-size="13" font-weight="700" fill="#fff" text-anchor="middle">2</text><path d="M401.2 344.9h22a2.500 2.500 0 0 1 2.500 2.500v16a2.500 2.500 0 0 1-2.500 2.500h-7.0l-4 4.300-4-4.300h-7.0a2.500 2.500 0 0 1-2.500-2.500v-16a2.500 2.500 0 0 1 2.500-2.500z" fill="#7aad22" stroke="#5f8c17" stroke-width="1"/><text x="412.2" y="360.0" font-size="13" font-weight="700" fill="#fff" text-anchor="middle">6</text><path d="M392.5 386.9h22a2.500 2.500 0 0 1 2.500 2.500v16a2.500 2.500 0 0 1-2.500 2.500h-7.0l-4 4.300-4-4.300h-7.0a2.500 2.500 0 0 1-2.500-2.500v-16a2.500 2.500 0 0 1 2.500-2.500z" fill="#7aad22" stroke="#5f8c17" stroke-width="1"/><text x="403.5" y="402.0" font-size="13" font-weight="700" fill="#fff" text-anchor="middle">5</text><path d="M311.4 444.1h22a2.500 2.500 0 0 1 2.500 2.500v16a2.500 2.500 0 0 1-2.500 2.500h-7.0l-4 4.300-4-4.300h-7.0a2.500 2.500 0 0 1-2.500-2.500v-16a2.500 2.500 0 0 1 2.500-2.500z" fill="#7aad22" stroke="#5f8c17" stroke-width="1"/><text x="322.4" y="459.2" font-size="13" font-weight="700" fill="#fff" text-anchor="middle">3</text><path d="M355.7 442.5h22a2.500 2.500 0 0 1 2.500 2.500v16a2.500 2.500 0 0 1-2.500 2.500h-7.0l-4 4.300-4-4.300h-7.0a2.500 2.500 0 0 1-2.500-2.500v-16a2.500 2.500 0 0 1 2.500-2.500z" fill="#7aad22" stroke="#5f8c17" stroke-width="1"/><text x="366.7" y="457.6" font-size="13" font-weight="700" fill="#fff" text-anchor="middle">4</text><text x="13.200000000000045" y="591.8" font-size="22.500" font-weight="700" fill="#fff" stroke="#8e8e8e" stroke-width="1.300" paint-order="stroke" letter-spacing="-.9" opacity=".96">Google</text><rect x="12.700000000000045" y="13.5" width="39" height="77.500" rx="4" fill="#fff"/><path transform="translate(22.5 23.200000000000003)" d="M1.200 6.500V1.200H6.500M13.700 1.200H19V6.500M19 12.400v5.300H13.700M6.500 17.700H1.200V12.400" fill="none" stroke="#555" stroke-width="2.400"/><g transform="translate(32.700000000000045 71.99999999999999)" fill="#666"><circle r="7.600"/><rect x="-2.500" y="-10.500" width="5" height="6" rx="1" transform="rotate(0)"/><rect x="-2.500" y="-10.500" width="5" height="6" rx="1" transform="rotate(45)"/><rect x="-2.500" y="-10.500" width="5" height="6" rx="1" transform="rotate(90)"/><rect x="-2.500" y="-10.500" width="5" height="6" rx="1" transform="rotate(135)"/><rect x="-2.500" y="-10.500" width="5" height="6" rx="1" transform="rotate(180)"/><rect x="-2.500" y="-10.500" width="5" height="6" rx="1" transform="rotate(225)"/><rect x="-2.500" y="-10.500" width="5" height="6" rx="1" transform="rotate(270)"/><rect x="-2.500" y="-10.500" width="5" height="6" rx="1" transform="rotate(315)"/><circle r="3.300" fill="#fff"/></g><rect x="440.0" y="443.59999999999997" width="39" height="39" rx="4" fill="#fff"/><g transform="translate(459.5 462.8)" stroke="#c98a12" stroke-width=".8"><path d="M-5.500-3.200q-2.300 0-2.800 2.200l-.9 6.800 2.300.6.900-4.400.900 13.200h8.200l.900-13.200.900 4.400 2.300-.6-.900-6.800q-.5-2.200-2.800-2.200z" fill="#eaa722"/><circle cy="-8.300" r="4.700" fill="#eeac28"/><path d="M0-2.500v7" stroke="#c98a12" stroke-width=".9"/></g><rect x="440.0" y="495.3" width="39" height="79.200" rx="4" fill="#fff"/><path d="M446.70000000000005 534.8h26" stroke="#e6e6e6" stroke-width="1"/><path d="M452.20000000000005 514.3h14.500M459.5 507.00000000000006v14.500M452.20000000000005 554.8h14.500" stroke="#666" stroke-width="2" fill="none"/></g></svg>
<!-- p_timeline -->
<div class="b" style="left:83.4px;top:686.9px;width:1884.0px;height:285.3px;background:#fff;border-radius:4px;box-shadow:0 1px 5px rgba(60,64,90,.13),0 0 1px rgba(60,64,90,.18);"></div>
<div class="b" style="left:83.4px;top:686.9px;width:1884.0px;height:48.9px;background:#f6f6f6;border-radius:4px 4px 0 0;border-bottom:1px solid #dedede;"></div>
<span class="t" style="left:108.6px;top:702.0px;font-size:16.5px;color:#444;letter-spacing:0.26px;-webkit-text-stroke:0.8px #444;">Route Name</span>
<span class="t" style="left:358.6px;top:692.8px;font-size:15px;color:#555;letter-spacing:-0.04px;">Sat, April 12</span>
<div class="b" style="left:376.2px;top:727.0px;width:1.0px;height:8.0px;background:#d8d8d8;"></div>
<span class="t" style="left:379.5px;top:713.8px;font-size:13.5px;color:#555;letter-spacing:0.05px;">08:00</span>
<div class="b" style="left:529.1px;top:727.0px;width:1.0px;height:8.0px;background:#d8d8d8;"></div>
<span class="t" style="left:532.4px;top:713.8px;font-size:13.5px;color:#555;letter-spacing:0.05px;">09:00</span>
<div class="b" style="left:682.1px;top:727.0px;width:1.0px;height:8.0px;background:#d8d8d8;"></div>
<span class="t" style="left:685.4px;top:713.8px;font-size:13.5px;color:#555;letter-spacing:0.05px;">10:00</span>
<div class="b" style="left:835.0px;top:727.0px;width:1.0px;height:8.0px;background:#d8d8d8;"></div>
<span class="t" style="left:838.3px;top:713.8px;font-size:13.5px;color:#555;letter-spacing:0.30px;">11:00</span>
<div class="b" style="left:988.0px;top:727.0px;width:1.0px;height:8.0px;background:#d8d8d8;"></div>
<span class="t" style="left:991.3px;top:713.8px;font-size:13.5px;color:#555;letter-spacing:0.05px;">12:00</span>
<div class="b" style="left:1140.9px;top:727.0px;width:1.0px;height:8.0px;background:#d8d8d8;"></div>
<span class="t" style="left:1144.2px;top:713.8px;font-size:13.5px;color:#555;letter-spacing:0.05px;">13:00</span>
<div class="b" style="left:1293.8px;top:727.0px;width:1.0px;height:8.0px;background:#d8d8d8;"></div>
<span class="t" style="left:1297.1px;top:713.8px;font-size:13.5px;color:#555;letter-spacing:0.05px;">14:00</span>
<div class="b" style="left:1446.8px;top:727.0px;width:1.0px;height:8.0px;background:#d8d8d8;"></div>
<span class="t" style="left:1450.1px;top:713.8px;font-size:13.5px;color:#555;letter-spacing:0.05px;">15:00</span>
<div class="b" style="left:1599.7px;top:727.0px;width:1.0px;height:8.0px;background:#d8d8d8;"></div>
<span class="t" style="left:1603.0px;top:713.8px;font-size:13.5px;color:#555;letter-spacing:0.05px;">16:00</span>
<div class="b" style="left:1752.7px;top:727.0px;width:1.0px;height:8.0px;background:#d8d8d8;"></div>
<span class="t" style="left:1756.0px;top:713.8px;font-size:13.5px;color:#555;letter-spacing:0.05px;">17:00</span>
<div class="b" style="left:1905.6px;top:727.0px;width:1.0px;height:8.0px;background:#d8d8d8;"></div>
<span class="t" style="left:1908.9px;top:713.8px;font-size:13.5px;color:#555;letter-spacing:0.05px;">18:00</span>
<div class="b" style="left:353.4px;top:686.9px;width:1.0px;height:226.6px;background:#e2e2e2;"></div>
<div class="b" style="left:89.5px;top:742.9px;width:9.3px;height:45.6px;background:#e9631f;border-radius:2.5px;"></div>
<span class="t" style="left:108.6px;top:748.8px;font-size:16px;color:#555;letter-spacing:0.05px;">Last Mile Route 0003 (Part 001)</span>
<span class="t" style="left:108.6px;top:769.7px;font-size:15px;color:#6a6a6a;letter-spacing:0.29px;">Driver 0003</span>
<div class="b" style="left:463.2px;top:750.2px;width:1216.8px;height:31.2px;background:#f9d5c6;"></div>
<div class="b" style="left:447.2px;top:749.8px;width:32.0px;height:32.0px;background:#fff;border:1px solid #8a8a8a;border-radius:4.5px;"></div>
<svg class="b" style="left:454.2px;top:756.3px;" width="18" height="18" viewBox="0 0 16 16"><path fill="#555" d="M8 1.200 1.200 6.800V15h4.300v-4.600a2.500 2.500 0 0 1 5 0V15h4.300V6.800z"/></svg>
<div class="b" style="left:575.9px;top:749.7px;width:32.0px;height:32.2px;background:#e9631f;border:1px solid #c9521b;border-radius:3.6px;"></div>
<span class="t" style="left:587.3px;top:757.8px;font-size:16.5px;color:#fffbea;-webkit-text-stroke:0.5px #fffbea;">1</span>
<div class="b" style="left:625.7px;top:749.7px;width:32.0px;height:32.2px;background:#e9631f;border:1px solid #c9521b;border-radius:3.6px;"></div>
<span class="t" style="left:637.1px;top:757.8px;font-size:16.5px;color:#fffbea;-webkit-text-stroke:0.5px #fffbea;">2</span>
<div class="b" style="left:726.8px;top:749.7px;width:32.0px;height:32.2px;background:#e9631f;border:1px solid #c9521b;border-radius:3.6px;"></div>
<span class="t" style="left:738.2px;top:757.8px;font-size:16.5px;color:#fffbea;-webkit-text-stroke:0.5px #fffbea;">3</span>
<div class="b" style="left:810.0px;top:749.7px;width:32.0px;height:32.2px;background:#e9631f;border:1px solid #c9521b;border-radius:3.6px;"></div>
<span class="t" style="left:821.4px;top:757.8px;font-size:16.5px;color:#fffbea;-webkit-text-stroke:0.5px #fffbea;">4</span>
<div class="b" style="left:907.9px;top:749.7px;width:32.0px;height:32.2px;background:#e9631f;border:1px solid #c9521b;border-radius:3.6px;"></div>
<span class="t" style="left:919.3px;top:757.8px;font-size:16.5px;color:#fffbea;-webkit-text-stroke:0.5px #fffbea;">5</span>
<div class="b" style="left:1032.6px;top:749.7px;width:64.3px;height:32.2px;background:#e9631f;border:1px solid #c9521b;border-radius:3.6px;"></div>
<span class="t" style="left:1044.0px;top:757.8px;font-size:16.5px;color:#fffbea;-webkit-text-stroke:0.5px #fffbea;">6</span>
<svg class="b" style="left:1072.6px;top:759.5px;" width="18" height="13.5" viewBox="0 0 16 12"><path fill="#fff" d="M1 1h10.500v1.200h1.900c.9 0 1.600.7 1.600 1.600v2.400c0 .9-.7 1.600-1.600 1.600h-1.900v1.200c0 .9-.7 1.600-1.600 1.600H2.600C1.700 10.600 1 9.900 1 9zM11.500 3.400v3.200h1.700V3.400z"/></svg>
<div class="b" style="left:1205.6px;top:749.7px;width:32.0px;height:32.2px;background:#e9631f;border:1px solid #c9521b;border-radius:3.6px;"></div>
<span class="t" style="left:1217.0px;top:757.8px;font-size:16.5px;color:#fffbea;-webkit-text-stroke:0.5px #fffbea;">7</span>
<div class="b" style="left:1265.8px;top:749.7px;width:32.0px;height:32.2px;background:#e9631f;border:1px solid #c9521b;border-radius:3.6px;"></div>
<span class="t" style="left:1277.2px;top:757.8px;font-size:16.5px;color:#fffbea;-webkit-text-stroke:0.5px #fffbea;">8</span>
<div class="b" style="left:1386.7px;top:749.7px;width:32.0px;height:32.2px;background:#e9631f;border:1px solid #c9521b;border-radius:3.6px;"></div>
<span class="t" style="left:1398.1px;top:757.8px;font-size:16.5px;color:#fffbea;-webkit-text-stroke:0.5px #fffbea;">9</span>
<div class="b" style="left:1467.8px;top:749.7px;width:32.0px;height:32.2px;background:#e9631f;border:1px solid #c9521b;border-radius:3.6px;"></div>
<span class="t" style="left:1474.6px;top:757.8px;font-size:16.5px;color:#fffbea;-webkit-text-stroke:0.5px #fffbea;">10</span>
<div class="b" style="left:1651.0px;top:749.7px;width:32.0px;height:32.2px;background:#e9631f;border:1px solid #c9521b;border-radius:3.6px;"></div>
<span class="t" style="left:1658.4px;top:757.8px;font-size:16.5px;color:#fffbea;-webkit-text-stroke:0.5px #fffbea;">11</span>
<div class="b" style="left:83.4px;top:794.8px;width:1884.0px;height:1.0px;background:#ececec;"></div>
<div class="b" style="left:89.5px;top:802.2px;width:9.3px;height:45.6px;background:#4a76e8;border-radius:2.5px;"></div>
<span class="t" style="left:108.6px;top:807.7px;font-size:16px;color:#555;letter-spacing:0.05px;">Last Mile Route 0003 (Part 002)</span>
<span class="t" style="left:108.6px;top:828.6px;font-size:15px;color:#6a6a6a;letter-spacing:0.29px;">Driver 0003</span>
<div class="b" style="left:772.0px;top:809.1px;width:837.7px;height:31.2px;background:#d1dbf8;"></div>
<div class="b" style="left:756.0px;top:808.7px;width:32.0px;height:32.0px;background:#fff;border:1px solid #8a8a8a;border-radius:4.5px;"></div>
<svg class="b" style="left:763.0px;top:815.2px;" width="18" height="18" viewBox="0 0 16 16"><path fill="#555" d="M8 1.200 1.200 6.800V15h4.300v-4.600a2.500 2.500 0 0 1 5 0V15h4.300V6.800z"/></svg>
<div class="b" style="left:824.0px;top:808.6px;width:32.0px;height:32.2px;background:#4a76e8;border:1px solid #3a62cc;border-radius:3.6px;"></div>
<span class="t" style="left:835.4px;top:816.7px;font-size:16.5px;color:#fffbea;-webkit-text-stroke:0.5px #fffbea;">1</span>
<div class="b" style="left:893.8px;top:808.6px;width:32.0px;height:32.2px;background:#4a76e8;border:1px solid #3a62cc;border-radius:3.6px;"></div>
<span class="t" style="left:905.2px;top:816.7px;font-size:16.5px;color:#fffbea;-webkit-text-stroke:0.5px #fffbea;">2</span>
<div class="b" style="left:983.7px;top:808.6px;width:32.0px;height:32.2px;background:#4a76e8;border:1px solid #3a62cc;border-radius:3.6px;"></div>
<span class="t" style="left:995.1px;top:816.7px;font-size:16.5px;color:#fffbea;-webkit-text-stroke:0.5px #fffbea;">3</span>
<div class="b" style="left:1086.6px;top:808.6px;width:32.0px;height:32.2px;background:#4a76e8;border:1px solid #3a62cc;border-radius:3.6px;"></div>
<span class="t" style="left:1098.0px;top:816.7px;font-size:16.5px;color:#fffbea;-webkit-text-stroke:0.5px #fffbea;">4</span>
<div class="b" style="left:1176.5px;top:808.6px;width:32.0px;height:32.2px;background:#4a76e8;border:1px solid #3a62cc;border-radius:3.6px;"></div>
<span class="t" style="left:1187.9px;top:816.7px;font-size:16.5px;color:#fffbea;-webkit-text-stroke:0.5px #fffbea;">5</span>
<div class="b" style="left:1293.8px;top:808.6px;width:64.3px;height:32.2px;background:#4a76e8;border:1px solid #3a62cc;border-radius:3.6px;"></div>
<span class="t" style="left:1305.2px;top:816.7px;font-size:16.5px;color:#fffbea;-webkit-text-stroke:0.5px #fffbea;">6</span>
<svg class="b" style="left:1333.8px;top:818.4px;" width="18" height="13.5" viewBox="0 0 16 12"><path fill="#fff" d="M1 1h10.500v1.200h1.900c.9 0 1.600.7 1.600 1.600v2.400c0 .9-.7 1.600-1.600 1.600h-1.900v1.200c0 .9-.7 1.600-1.600 1.600H2.600C1.700 10.600 1 9.900 1 9zM11.500 3.400v3.200h1.700V3.400z"/></svg>
<div class="b" style="left:1371.0px;top:808.6px;width:32.0px;height:32.2px;background:#4a76e8;border:1px solid #3a62cc;border-radius:3.6px;"></div>
<span class="t" style="left:1382.4px;top:816.7px;font-size:16.5px;color:#fffbea;-webkit-text-stroke:0.5px #fffbea;">7</span>
<div class="b" style="left:1422.0px;top:808.6px;width:32.0px;height:32.2px;background:#4a76e8;border:1px solid #3a62cc;border-radius:3.6px;"></div>
<span class="t" style="left:1433.4px;top:816.7px;font-size:16.5px;color:#fffbea;-webkit-text-stroke:0.5px #fffbea;">8</span>
<div class="b" style="left:1510.8px;top:808.6px;width:32.0px;height:32.2px;background:#4a76e8;border:1px solid #3a62cc;border-radius:3.6px;"></div>
<span class="t" style="left:1522.2px;top:816.7px;font-size:16.5px;color:#fffbea;-webkit-text-stroke:0.5px #fffbea;">9</span>
<div class="b" style="left:1580.9px;top:808.6px;width:32.0px;height:32.2px;background:#4a76e8;border:1px solid #3a62cc;border-radius:3.6px;"></div>
<span class="t" style="left:1587.7px;top:816.7px;font-size:16.5px;color:#fffbea;-webkit-text-stroke:0.5px #fffbea;">10</span>
<div class="b" style="left:83.4px;top:854.1px;width:1884.0px;height:1.0px;background:#ececec;"></div>
<div class="b" style="left:89.5px;top:861.5px;width:9.3px;height:45.6px;background:#7aad22;border-radius:2.5px;"></div>
<span class="t" style="left:108.6px;top:866.7px;font-size:16px;color:#555;letter-spacing:0.05px;">Last Mile Route 0003 (Part 003)</span>
<span class="t" style="left:108.6px;top:887.6px;font-size:15px;color:#6a6a6a;letter-spacing:0.29px;">Driver 0003</span>
<div class="b" style="left:540.3px;top:868.1px;width:646.2px;height:31.2px;background:#deeec6;"></div>
<div class="b" style="left:524.3px;top:867.7px;width:32.0px;height:32.0px;background:#fff;border:1px solid #8a8a8a;border-radius:4.5px;"></div>
<svg class="b" style="left:531.3px;top:874.2px;" width="18" height="18" viewBox="0 0 16 16"><path fill="#555" d="M8 1.200 1.200 6.800V15h4.300v-4.600a2.500 2.500 0 0 1 5 0V15h4.300V6.800z"/></svg>
<div class="b" style="left:591.7px;top:867.6px;width:32.0px;height:32.2px;background:#7aad22;border:1px solid #66951a;border-radius:3.6px;"></div>
<span class="t" style="left:603.1px;top:875.7px;font-size:16.5px;color:#fffbea;-webkit-text-stroke:0.5px #fffbea;">1</span>
<div class="b" style="left:702.8px;top:867.6px;width:32.0px;height:32.2px;background:#7aad22;border:1px solid #66951a;border-radius:3.6px;"></div>
<span class="t" style="left:714.2px;top:875.7px;font-size:16.5px;color:#fffbea;-webkit-text-stroke:0.5px #fffbea;">2</span>
<div class="b" style="left:804.1px;top:867.6px;width:32.0px;height:32.2px;background:#7aad22;border:1px solid #66951a;border-radius:3.6px;"></div>
<span class="t" style="left:815.5px;top:875.7px;font-size:16.5px;color:#fffbea;-webkit-text-stroke:0.5px #fffbea;">3</span>
<div class="b" style="left:854.8px;top:867.6px;width:32.0px;height:32.2px;background:#7aad22;border:1px solid #66951a;border-radius:3.6px;"></div>
<span class="t" style="left:866.2px;top:875.7px;font-size:16.5px;color:#fffbea;-webkit-text-stroke:0.5px #fffbea;">4</span>
<div class="b" style="left:945.0px;top:867.6px;width:32.0px;height:32.2px;background:#7aad22;border:1px solid #66951a;border-radius:3.6px;"></div>
<span class="t" style="left:956.4px;top:875.7px;font-size:16.5px;color:#fffbea;-webkit-text-stroke:0.5px #fffbea;">5</span>
<div class="b" style="left:1035.7px;top:867.6px;width:32.0px;height:32.2px;background:#7aad22;border:1px solid #66951a;border-radius:3.6px;"></div>
<span class="t" style="left:1047.1px;top:875.7px;font-size:16.5px;color:#fffbea;-webkit-text-stroke:0.5px #fffbea;">6</span>
<div class="b" style="left:1097.9px;top:867.6px;width:32.0px;height:32.2px;background:#7aad22;border:1px solid #66951a;border-radius:3.6px;"></div>
<span class="t" style="left:1109.3px;top:875.7px;font-size:16.5px;color:#fffbea;-webkit-text-stroke:0.5px #fffbea;">7</span>
<div class="b" style="left:1157.7px;top:867.6px;width:32.0px;height:32.2px;background:#7aad22;border:1px solid #66951a;border-radius:3.6px;"></div>
<span class="t" style="left:1169.1px;top:875.7px;font-size:16.5px;color:#fffbea;-webkit-text-stroke:0.5px #fffbea;">8</span>
<div class="b" style="left:83.4px;top:913.0px;width:1884.0px;height:1.0px;background:#e6e6e6;"></div>
<svg class="b" style="left:98.3px;top:935.2px;" width="18" height="18" viewBox="0 0 18 18"><circle cx="9" cy="9" r="8.500" fill="#555"/><path d="M4 11a5 5 0 0 1 10 0" fill="none" stroke="#fff" stroke-width="1.900"/><circle cx="9" cy="11" r="2.200" fill="#fff"/></svg>
<span class="t" style="left:122.7px;top:936.2px;font-size:15px;color:#666;letter-spacing:0.08px;">Skipped</span>
<svg class="b" style="left:198.1px;top:935.2px;" width="18" height="18" viewBox="0 0 18 18"><circle cx="9" cy="9" r="8.500" fill="#555"/><path d="M5.800 5.800 12.200 12.200M12.200 5.800 5.800 12.200" stroke="#fff" stroke-width="1.900"/></svg>
<span class="t" style="left:221.8px;top:936.2px;font-size:15px;color:#666;letter-spacing:-0.17px;">Failed</span>
<div class="b" style="left:282.5px;top:934.0px;width:1.0px;height:21.0px;background:#cfcfcf;"></div>
<svg class="b" style="left:303.0px;top:934.5px;" width="19" height="19" viewBox="0 0 19 19"><path fill="#555" d="M9.500 1 1 8v10h5.700v-5a2.800 2.800 0 0 1 5.600 0v5H18V8z"/></svg>
<span class="t" style="left:327.0px;top:936.2px;font-size:15px;color:#666;letter-spacing:0.44px;">Depot</span>
<svg class="b" style="left:391.5px;top:935.0px;" width="14" height="19" viewBox="0 0 14 19"><path fill="none" stroke="#555" stroke-width="1.700" d="M2 1.500h10M2 17.500h10M3 1.500v3.500l3.200 4.500L3 14v3.500M11 1.500v3.500L7.800 9.500 11 14v3.500"/><path fill="#555" d="M4 16.500l3-3.500 3 3.500z"/></svg>
<span class="t" style="left:413.3px;top:936.2px;font-size:15px;color:#666;letter-spacing:0.20px;">Wait Time</span>
<svg class="b" style="left:501.3px;top:935.2px;" width="18" height="18" viewBox="0 0 18 18"><circle cx="9" cy="9" r="7.600" fill="none" stroke="#555" stroke-width="1.600"/><path d="M9 4.500V9.300l3 1.800" fill="none" stroke="#555" stroke-width="1.600"/></svg>
<span class="t" style="left:526.0px;top:936.2px;font-size:15px;color:#666;letter-spacing:-0.11px;">Service Time</span>
<svg class="b" style="left:633.0px;top:935.0px;" width="18" height="18" viewBox="0 0 18 18"><path fill="#555" d="M2 1h11.500v1.500H15c1.100 0 2 .9 2 2v2c0 1.100-.9 2-2 2h-1.500V10c0 1.100-.9 2-2 2H4c-1.100 0-2-.9-2-2zM13.500 4v3H15V4zM1 14.500h15v2H1z"/></svg>
<span class="t" style="left:657.0px;top:936.2px;font-size:15px;color:#666;letter-spacing:0.07px;">Break Time</span>
<div class="b" style="left:753.3px;top:934.0px;width:1.0px;height:21.0px;background:#cfcfcf;"></div>
<div class="b" style="left:773.2px;top:934.0px;width:34.2px;height:19.4px;border:1px solid #bdbdbd;border-radius:3px;background:repeating-linear-gradient(125deg,#fff 0 3px,#f0f0f0 3px 6px);"></div>
<span class="t" style="left:813.6px;top:936.2px;font-size:15px;color:#666;letter-spacing:0.06px;">Out of Sequence</span>
<div class="b" style="left:947.2px;top:934.0px;width:34.5px;height:19.4px;border:1px dashed #bdbdbd;border-radius:3px;background:repeating-linear-gradient(125deg,#fff 0 3px,#f0f0f0 3px 6px);"></div>
<span class="t" style="left:986.5px;top:936.2px;font-size:15px;color:#666;letter-spacing:0.23px;">Actual/Predicted Time</span>
<div class="b" style="left:1157.8px;top:934.0px;width:1.0px;height:21.0px;background:#cfcfcf;"></div>
<div class="b" style="left:1178.3px;top:934.0px;width:18.7px;height:19.4px;background:#fff;border:1px solid #bdbdbd;border-radius:4px;"></div>
<div class="b" style="left:1188.0px;top:937.0px;width:6.0px;height:6.0px;background:#c8323c;border-radius:3px;"></div>
<span class="t" style="left:1202.2px;top:936.2px;font-size:15px;color:#666;letter-spacing:0.21px;">Missed Time Window</span>
<div class="b" style="left:1367.3px;top:934.0px;width:19.1px;height:19.4px;background:#fff;border:1px solid #bdbdbd;border-radius:4px;background:linear-gradient(135deg,#7aad22 0 32%,#fff 33%);"></div>
<span class="t" style="left:1391.9px;top:936.2px;font-size:15px;color:#666;letter-spacing:0.09px;">Custom Colorize</span>
<div class="b" style="left:1556.9px;top:934.0px;width:19.8px;height:19.5px;background:#fff;border:2px solid #555;border-radius:2.5px;"></div>
<span class="t" style="left:1589.3px;top:935.1px;font-size:18px;color:#555;letter-spacing:-0.09px;">Ignore dates</span>
<div class="b" style="left:1724.6px;top:932.0px;width:1.0px;height:25.0px;background:#cfcfcf;"></div>
<span class="t" style="left:1759.0px;top:935.1px;font-size:18px;color:#555;">Zoom</span>
<div class="b" style="left:1820.7px;top:924.5px;width:80.3px;height:37.5px;background:#fff;border:1px solid #eaeaea;border-radius:6px;"></div>
<div class="b" style="left:1861.0px;top:924.5px;width:1.0px;height:37.5px;background:#eaeaea;"></div>
<svg class="b" style="left:1832.0px;top:935.0px;" width="18" height="18" viewBox="0 0 18 18"><path d="M2 9h14" stroke="#555" stroke-width="1.800"/></svg>
<svg class="b" style="left:1872.0px;top:935.0px;" width="18" height="18" viewBox="0 0 18 18"><path d="M2 9h14M9 2v14" stroke="#555" stroke-width="1.800"/></svg>
<div class="b" style="left:1911.4px;top:924.5px;width:40.2px;height:37.5px;background:#fff;border:1px solid #eaeaea;border-radius:6px;"></div>
<svg class="b" style="left:1921.5px;top:933.5px;" width="20" height="20" viewBox="0 0 20 20"><g fill="#555"><path d="M1 1h5.500L4.600 2.900l3 3-1.700 1.700-3-3L1 6.500zM19 1v5.500l-1.900-1.900-3 3-1.700-1.700 3-3L13.500 1zM1 19v-5.500l1.900 1.900 3-3 1.700 1.700-3 3L6.500 19zM19 19h-5.500l1.900-1.900-3-3 1.700-1.700 3 3 1.900-1.900z"/></g></svg>
</body></html>
